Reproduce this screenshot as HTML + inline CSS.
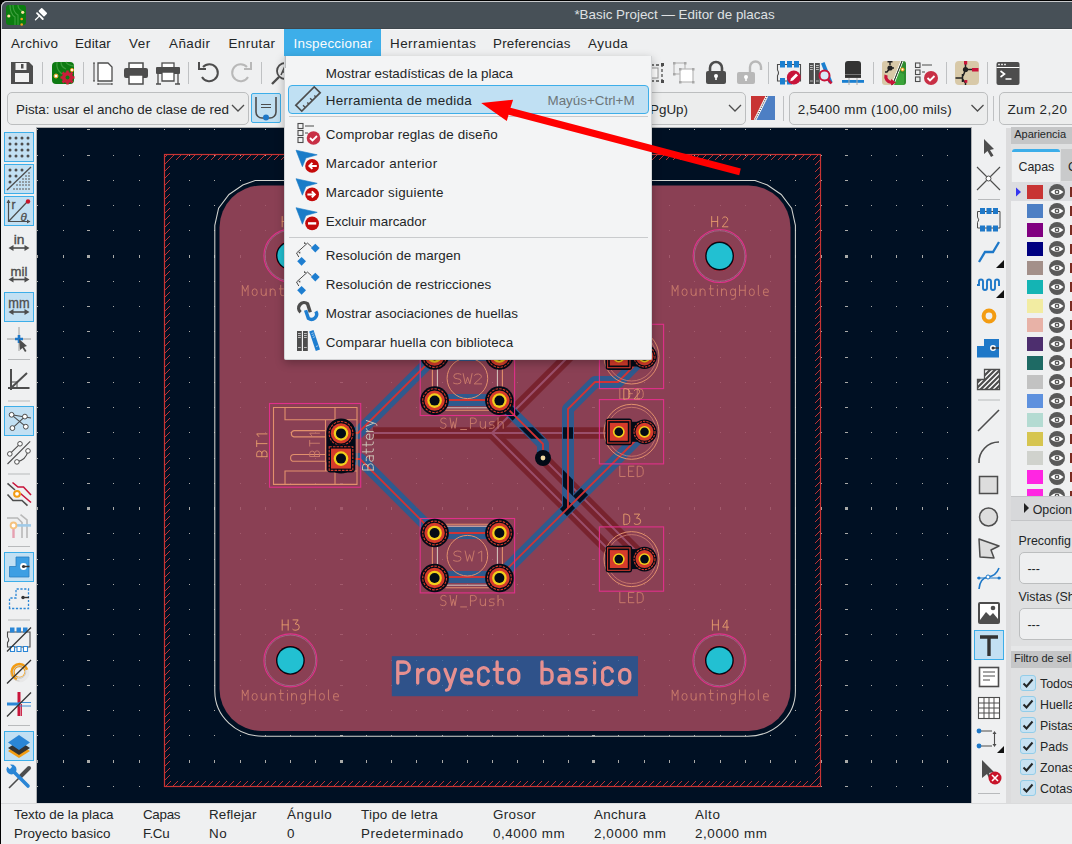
<!DOCTYPE html><html><head><meta charset="utf-8"><style>
*{margin:0;padding:0;box-sizing:border-box}
html,body{width:1072px;height:844px;overflow:hidden;background:#000}
body{position:relative;font-family:"Liberation Sans",sans-serif;font-size:13.4px;color:#232627}
.a{position:absolute}
.t{position:absolute;white-space:nowrap;line-height:1}
.sep{position:absolute;width:1px;background:#bfc1c3}
.hsep{position:absolute;height:1px;background:#c4c6c8}
.combo{position:absolute;border:1px solid #bcbebf;border-radius:5px;background:#eceded}
.tbtn{position:absolute;width:30px;height:30px;background:#c2e0f2;border:1px solid #3daee9;border-radius:2px}
svg{position:absolute;overflow:visible}
</style></head><body>
<div class="a" style="left:1px;top:1px;width:1071px;height:843px;background:#eff0f1;border-top-left-radius:6px;overflow:hidden"></div>
<div class="a" style="left:1px;top:1px;width:1071px;height:28px;background:#475057;border-top:1px solid #c8cacc;border-top-left-radius:6px;border-left:1px solid #c8cacc"></div>
<div class="a" style="left:2px;top:28px;width:1070px;height:1px;background:#3f474d"></div>
<div class="a" style="left:2px;top:29px;width:1070px;height:1px;background:#f7f7f8"></div>
<div class="t" style="left:574.4px;top:8.37px;font-size:13.4px;color:#dfe1e3;">*Basic Project — Editor de placas</div>
<div class="a" style="left:284px;top:29px;width:97px;height:27px;background:#3daee9"></div>
<div class="t" style="left:11px;top:36.87px;font-size:13.4px;color:#232627;letter-spacing:0.390px;">Archivo</div>
<div class="t" style="left:75px;top:36.87px;font-size:13.4px;color:#232627;letter-spacing:0.164px;">Editar</div>
<div class="t" style="left:129px;top:36.87px;font-size:13.4px;color:#232627;letter-spacing:0.600px;">Ver</div>
<div class="t" style="left:169px;top:36.87px;font-size:13.4px;color:#232627;letter-spacing:0.456px;">Añadir</div>
<div class="t" style="left:228.5px;top:36.87px;font-size:13.4px;color:#232627;letter-spacing:0.430px;">Enrutar</div>
<div class="t" style="left:293.5px;top:36.87px;font-size:13.4px;color:#fcfcfc;letter-spacing:0.233px;">Inspeccionar</div>
<div class="t" style="left:390px;top:36.87px;font-size:13.4px;color:#232627;letter-spacing:0.502px;">Herramientas</div>
<div class="t" style="left:493px;top:36.87px;font-size:13.4px;color:#232627;letter-spacing:0.201px;">Preferencias</div>
<div class="t" style="left:588px;top:36.87px;font-size:13.4px;color:#232627;letter-spacing:0.518px;">Ayuda</div>
<svg class="a" style="left:0;top:0" width="1072" height="100">
<g transform="translate(11,62) scale(1.0)"><path d="M0 0H18L22 4V22H0Z" fill="#4d4d4d"/><rect x="4.5" y="1" width="11" height="7" fill="#f2f2f2"/><rect x="10" y="2" width="2.5" height="4.5" fill="#4d4d4d"/><rect x="4" y="11" width="14" height="9" fill="#f2f2f2"/></g>
<g transform="translate(52,62) scale(1.0)"><rect x="0" y="0" width="22" height="22" rx="4" fill="#0d7a12"/><path d="M5 0 Q4 8 10 12 M9 0 Q9 5 14 7 M14 0 Q15 3 22 4" stroke="#3a9a3a" stroke-width="1.3" fill="none"/><circle cx="4" cy="14" r="2" fill="#fff" stroke="#f0a020" stroke-width="1"/><circle cx="20" cy="8" r="1.6" fill="#fff" stroke="#f0a020" stroke-width="1"/><circle cx="15.5" cy="15.5" r="5.5" fill="#c81e3a"/><circle cx="15.5" cy="15.5" r="2" fill="#0d7a12"/><path d="M15.5 8.5V22.5 M8.5 15.5H22.5 M10.5 10.5L20.5 20.5 M20.5 10.5L10.5 20.5" stroke="#c81e3a" stroke-width="2.5"/><circle cx="15.5" cy="15.5" r="2" fill="#0d7a12"/></g>
<g transform="translate(93,62) scale(1.0)"><path d="M5 1H15L19 5V19H5Z" fill="#fff" stroke="#4d4d4d" stroke-width="1.3"/><path d="M1 1V19 M0 1H2 M0 19H2 M5 22H19 M5 21V23 M19 21V23" stroke="#4d4d4d" stroke-width="1.1"/></g>
<g transform="translate(124,62) scale(1.0)"><rect x="5" y="1" width="14" height="6" fill="#fff" stroke="#4d4d4d" stroke-width="1.5"/><rect x="0" y="6" width="24" height="10" rx="2" fill="#4d4d4d"/><path d="M5 13H19V22H5Z" fill="#fff" stroke="#4d4d4d" stroke-width="1.5"/></g>
<g transform="translate(156,62) scale(1.0)"><rect x="6" y="1" width="12" height="5" fill="#fff" stroke="#4d4d4d" stroke-width="1.3"/><rect x="0" y="5" width="24" height="7" rx="1" fill="#4d4d4d"/><path d="M6 10H18V19H6Z" fill="#fff" stroke="#4d4d4d" stroke-width="1.3"/><path d="M2 12V22 M22 12V22 M0 22H5 M19 22H24" stroke="#4d4d4d" stroke-width="1.3"/></g>
<g transform="translate(198,61) scale(1.0)"><path d="M5 6 A8.5 8.5 0 1 1 4 16" fill="none" stroke="#4d4d4d" stroke-width="2"/><path d="M1 1V8H8" fill="none" stroke="#4d4d4d" stroke-width="2"/></g>
<g transform="translate(230,61) scale(1.0)"><g transform="translate(22,0) scale(-1,1)"><path d="M5 6 A8.5 8.5 0 1 1 4 16" fill="none" stroke="#b8b8b8" stroke-width="2"/><path d="M1 1V8H8" fill="none" stroke="#b8b8b8" stroke-width="2"/></g></g>
<g transform="translate(271,62) scale(1.0)"><circle cx="14" cy="9" r="8" fill="none" stroke="#4d4d4d" stroke-width="1.8"/><path d="M8 15L1 22" stroke="#4d4d4d" stroke-width="2.4"/><path d="M10 13L14 4L18 13 M11.5 10H16.5" stroke="#4d4d4d" stroke-width="1.5" fill="none"/></g>
<g transform="translate(652,62) scale(1.0)"><rect x="-6" y="3" width="16" height="16" fill="none" stroke="#4d4d4d" stroke-width="1.3" stroke-dasharray="3 2"/><rect x="-4" y="6" width="10" height="10" fill="#fff" stroke="#999" stroke-width="1"/><path d="M9 1h3v3h-3z M9 18h3v3h-3z" fill="#4d4d4d"/></g>
<g transform="translate(673,62) scale(1.0)"><rect x="1" y="1" width="11" height="11" fill="none" stroke="#b8b8b8" stroke-width="1.2"/><rect x="7" y="7" width="13" height="13" fill="#fff" stroke="#b8b8b8" stroke-width="1.2"/><path d="M0 0h2.5v2.5h-2.5z M11 0h2.5v2.5h-2.5z M0 11h2.5v2.5h-2.5z M6 6h2.5v2.5h-2.5z M19 6h2.5v2.5h-2.5z M6 19h2.5v2.5h-2.5z M19 19h2.5v2.5h-2.5z" fill="#a8a8a8"/></g>
<g transform="translate(705,61) scale(1.0)"><path d="M5 11V7a6 6 0 0 1 12 0V11" fill="none" stroke="#4d4d4d" stroke-width="2.6"/><rect x="1" y="10" width="20" height="13" rx="2" fill="#4d4d4d"/><circle cx="11" cy="15" r="2" fill="#fff"/><rect x="10.2" y="15" width="1.6" height="4" fill="#fff"/></g>
<g transform="translate(737,61) scale(1.0)"><path d="M13 11V6a5.5 5.5 0 0 1 11 0V9" fill="none" stroke="#b8b8b8" stroke-width="2.4"/><rect x="0" y="11" width="18" height="12" rx="2" fill="#b8b8b8"/><circle cx="9" cy="16" r="2" fill="#fff"/><rect x="8.2" y="16" width="1.6" height="4" fill="#fff"/></g>
<g transform="translate(777,61) scale(1.0)"><path d="M0.5 3.5H23.5V20H0.5V14.5Q2.5 12 0.5 9Z" fill="none" stroke="#4d4d4d" stroke-width="1.1"/><path d="M3 0h5v6.5h-5z M10 0h5v6.5h-5z M17 0h5v6.5h-5z M3 17h5v6.5h-5z M10 17h5v6.5h-5z" fill="#1a7fd0"/><circle cx="16.8" cy="16.5" r="6.9" fill="#c8143a"/><path d="M13.2 20.3l0.8-2.8 5-5 2 2-5 5z" fill="#fff"/></g>
<g transform="translate(809,61) scale(1.0)"><rect x="0" y="2" width="4.8" height="21" fill="#4d4d4d"/><rect x="6" y="2" width="4.8" height="21" fill="#4d4d4d"/><path d="M1 4.5h2.8M1 6.5h2.8M1 8.5h2.8M1 20h2.8M7 4.5h2.8M7 6.5h2.8M7 8.5h2.8M7 20h2.8" stroke="#c8c8c8" stroke-width="0.9"/><path d="M12 2.5l3.5-1.5 8 20-3.5 1.5z" fill="#1a7fd0"/><circle cx="15.5" cy="14.5" r="5" fill="#d8eaf7" stroke="#c8143a" stroke-width="2"/><path d="M18.8 18.2L22.5 22.5" stroke="#c8143a" stroke-width="2.6"/></g>
<g transform="translate(842,61) scale(1.0)"><path d="M3 3Q3 0 6 0H16Q19 0 19 3V16H3Z" fill="#333"/><path d="M3 13.5H19" stroke="#777" stroke-width="1"/><rect x="0" y="19" width="22" height="2.8" fill="#1a7fd0"/><path d="M3 16.5H19" stroke="#444" stroke-width="1"/><path d="M7 17V24 M15 17V24" stroke="#aaa" stroke-width="1"/></g>
<g transform="translate(882,61) scale(1.0)"><clipPath id="schc"><rect x="0" y="0" width="24" height="24" rx="3"/></clipPath><g clip-path="url(#schc)"><rect x="0" y="0" width="24" height="24" fill="#d8c9a8"/><path d="M19.5 0H24V24H10Z" fill="#2e8b30"/><path d="M15 10L22 13V24H11Z" fill="#3aa43a"/><path d="M19 0L9.5 24 M21 0L11.5 24" stroke="#fff" stroke-width="1"/><path d="M20 0L10.5 24" stroke="#333" stroke-width="1"/></g><circle cx="20.5" cy="8.5" r="2" fill="#f39c12"/><circle cx="20.5" cy="8.5" r="0.9" fill="#fff"/><path d="M8 0V4M5.5 0.7H10.5M8 7H12M8 7L5 11L3 11" stroke="#222" stroke-width="1.4" fill="none"/><circle cx="8" cy="7" r="2.6" fill="#222"/><path d="M4 14A6 6 0 0 0 9.5 21.5" stroke="#c8143a" stroke-width="3.2" fill="none"/><path d="M9 18L14 21.5L9 24.5Z" fill="#c8143a"/></g>
<g transform="translate(915,62) scale(1.0)"><rect x="0.5" y="1" width="4.5" height="4.5" fill="none" stroke="#4d4d4d" stroke-width="1.1"/><rect x="0.5" y="8" width="4.5" height="4.5" fill="none" stroke="#4d4d4d" stroke-width="1.1"/><rect x="0.5" y="15" width="4.5" height="4.5" fill="none" stroke="#4d4d4d" stroke-width="1.1"/><path d="M7 3H17 M7 10H10" stroke="#4d4d4d" stroke-width="1.1"/><circle cx="16" cy="16" r="7" fill="#c82f45"/><path d="M12.5 16l2.5 2.5 4.5-4.5" stroke="#fff" stroke-width="1.9" fill="none"/></g>
<g transform="translate(955,61) scale(1.0)"><rect x="0" y="0" width="24" height="24" rx="4" fill="#d8c9a8"/><path d="M10.5 0V7 M10.5 8.5H18 M10.5 9L8 15 M0.5 17H7.5 M7.5 13V21 M7.5 18L10.5 22 V24" stroke="#222" stroke-width="1.5" fill="none"/><circle cx="10.5" cy="8.5" r="2.6" fill="#222"/><rect x="9" y="0" width="3.2" height="3.5" fill="#c8143a"/><rect x="17" y="7" width="6.5" height="3.5" fill="#c8143a"/><rect x="9.5" y="19" width="2.8" height="2.8" fill="#c8143a"/></g>
<g transform="translate(996.5,62) scale(1.0)"><rect x="0" y="0" width="23" height="23" rx="2" fill="#4d4d4d"/><rect x="0" y="5" width="23" height="1" fill="#fff"/><path d="M2.5 1.5v2M1.5 2.5h2M5.5 1.5v2M4.5 2.5h2M8.5 1.5v2M7.5 2.5h2" stroke="#fff" stroke-width="0.7"/><path d="M4 9l4 3-4 3 M9 17h6" stroke="#fff" stroke-width="1.6" fill="none"/></g>
</svg>
<div class="sep" style="left:42.0px;top:62px;height:22px"></div>
<div class="sep" style="left:83.0px;top:62px;height:22px"></div>
<div class="sep" style="left:188.0px;top:62px;height:22px"></div>
<div class="sep" style="left:261.0px;top:62px;height:22px"></div>
<div class="sep" style="left:768.0px;top:62px;height:22px"></div>
<div class="sep" style="left:873.0px;top:62px;height:22px"></div>
<div class="sep" style="left:946.0px;top:62px;height:22px"></div>
<div class="sep" style="left:986.5px;top:62px;height:22px"></div>
<div class="combo" style="left:7px;top:92px;width:242px;height:33px"></div>
<div class="t" style="left:16px;top:102.87px;font-size:13.4px;color:#232627;">Pista: usar el ancho de clase de red</div>
<div class="tbtn" style="left:251px;top:93px;width:30px;height:30px"></div>
<div class="combo" style="left:620px;top:92px;width:126px;height:33px"></div>
<div class="t" style="left:650px;top:102.87px;font-size:13.4px;color:#232627;">PgUp)</div>
<div class="combo" style="left:789px;top:92px;width:199px;height:33px"></div>
<div class="t" style="left:797.7px;top:102.87px;font-size:13.4px;color:#232627;letter-spacing:0.270px;">2,5400 mm (100,00 mils)</div>
<div class="sep" style="left:993px;top:96px;height:25px"></div>
<svg class="a" style="left:0;top:0" width="1072" height="130">
<rect x="6" y="5" width="20" height="20" rx="3" fill="#0b7d10"/><path d="M10 5Q10 14 15 17V25 M13 5Q13 12 18 15V25 M18 5Q18 9 22 11" stroke="#3fa03f" stroke-width="1.1" fill="none"/><circle cx="8.8" cy="16" r="1.6" fill="#fde0a0"/><circle cx="22.7" cy="12.3" r="1.6" fill="#fde0a0"/><circle cx="21.7" cy="19" r="1.3" fill="#f0a020"/><circle cx="21.7" cy="24.5" r="1.3" fill="#f0a020"/>
<path d="M35.5 19.8L39.2 16.1" stroke="#fff" stroke-width="1.3" stroke-linecap="round"/><path d="M37 13.2L42.8 19" stroke="#fff" stroke-width="1.8" stroke-linecap="round"/><g transform="translate(43.2,12.6) rotate(-45)"><rect x="-2.4" y="-4.5" width="4.8" height="8" rx="0.8" fill="#fff"/></g>
<path d="M232 105l6 6 6-6" fill="none" stroke="#4d4d4d" stroke-width="1.3"/>
<path d="M729 105l6 6 6-6" fill="none" stroke="#4d4d4d" stroke-width="1.3"/>
<path d="M971.5 105l6 6 6-6" fill="none" stroke="#4d4d4d" stroke-width="1.3"/>
<path d="M256 97V112a6 6 0 0 0 6 6H270a6 6 0 0 0 6 -6V97" fill="none" stroke="#4d4d4d" stroke-width="1.6"/><path d="M261 104.5H271 M261 107.5H271" stroke="#4d4d4d" stroke-width="1.2"/><circle cx="266" cy="117.5" r="3" fill="#1e78c8"/>
<path d="M751 96H775V120H751Z" fill="#4d7fc4"/><path d="M751 96H767L755 120H751Z" fill="#c83434"/><path d="M767 96L755 120" stroke="#fff" stroke-width="2.6"/><path d="M767 96L755 120" stroke="#222" stroke-width="1" stroke-dasharray="1.2 1.2"/>
</svg>
<div class="sep" style="left:783px;top:96px;height:25px"></div>
<div class="combo" style="left:999px;top:92px;width:90px;height:33px"></div>
<div class="t" style="left:1007.5px;top:102.87px;font-size:13.4px;color:#232627;letter-spacing:0.400px;">Zum 2,20</div>
<div class="a" style="left:36px;top:127px;width:936px;height:677px;background:#aeb0b2"></div>
<svg class="a" style="left:0;top:0" width="1072" height="844" viewBox="0 0 1072 844">
<defs><clipPath id="cv"><rect x="37" y="128" width="934" height="675"/></clipPath>
<pattern id="hatch" patternUnits="userSpaceOnUse" width="7" height="7"><path d="M-1,8 L8,-1 M-4,4 L4,-4 M3,11 L11,3" stroke="#c83434" stroke-width="0.95"/></pattern>
</defs>
<g clip-path="url(#cv)">
<rect x="37" y="128" width="934" height="675" fill="#001023"/>
<path d="M37 129h1v1h-1zM37 155h1v1h-1zM37 180h1v1h-1zM37 205h1v1h-1zM37 230h1v1h-1zM37 255h1v3h-1zM37 281h1v1h-1zM37 306h1v1h-1zM37 331h1v1h-1zM37 357h1v1h-1zM37 382h1v1h-1zM37 407h1v1h-1zM37 432h1v1h-1zM37 458h1v1h-1zM37 483h1v1h-1zM37 507h1v3h-1zM37 533h1v1h-1zM37 559h1v1h-1zM37 584h1v1h-1zM37 609h1v1h-1zM37 634h1v1h-1zM37 660h1v1h-1zM37 685h1v1h-1zM37 710h1v1h-1zM37 735h1v1h-1zM37 760h1v3h-1zM37 786h1v1h-1zM63 129h1v1h-1zM63 155h1v1h-1zM63 180h1v1h-1zM63 205h1v1h-1zM63 230h1v1h-1zM63 255h1v3h-1zM63 281h1v1h-1zM63 306h1v1h-1zM63 331h1v1h-1zM63 357h1v1h-1zM63 382h1v1h-1zM63 407h1v1h-1zM63 432h1v1h-1zM63 458h1v1h-1zM63 483h1v1h-1zM63 507h1v3h-1zM63 533h1v1h-1zM63 559h1v1h-1zM63 584h1v1h-1zM63 609h1v1h-1zM63 634h1v1h-1zM63 660h1v1h-1zM63 685h1v1h-1zM63 710h1v1h-1zM63 735h1v1h-1zM63 760h1v3h-1zM63 786h1v1h-1zM87 129h3v1h-3zM87 155h3v1h-3zM87 180h3v1h-3zM87 205h3v1h-3zM87 230h3v1h-3zM87 255h3v3h-3zM87 281h3v1h-3zM87 306h3v1h-3zM87 331h3v1h-3zM87 357h3v1h-3zM87 382h3v1h-3zM87 407h3v1h-3zM87 432h3v1h-3zM87 458h3v1h-3zM87 483h3v1h-3zM87 507h3v3h-3zM87 533h3v1h-3zM87 559h3v1h-3zM87 584h3v1h-3zM87 609h3v1h-3zM87 634h3v1h-3zM87 660h3v1h-3zM87 685h3v1h-3zM87 710h3v1h-3zM87 735h3v1h-3zM87 760h3v3h-3zM87 786h3v1h-3zM113 129h1v1h-1zM113 155h1v1h-1zM113 180h1v1h-1zM113 205h1v1h-1zM113 230h1v1h-1zM113 255h1v3h-1zM113 281h1v1h-1zM113 306h1v1h-1zM113 331h1v1h-1zM113 357h1v1h-1zM113 382h1v1h-1zM113 407h1v1h-1zM113 432h1v1h-1zM113 458h1v1h-1zM113 483h1v1h-1zM113 507h1v3h-1zM113 533h1v1h-1zM113 559h1v1h-1zM113 584h1v1h-1zM113 609h1v1h-1zM113 634h1v1h-1zM113 660h1v1h-1zM113 685h1v1h-1zM113 710h1v1h-1zM113 735h1v1h-1zM113 760h1v3h-1zM113 786h1v1h-1zM139 129h1v1h-1zM139 155h1v1h-1zM139 180h1v1h-1zM139 205h1v1h-1zM139 230h1v1h-1zM139 255h1v3h-1zM139 281h1v1h-1zM139 306h1v1h-1zM139 331h1v1h-1zM139 357h1v1h-1zM139 382h1v1h-1zM139 407h1v1h-1zM139 432h1v1h-1zM139 458h1v1h-1zM139 483h1v1h-1zM139 507h1v3h-1zM139 533h1v1h-1zM139 559h1v1h-1zM139 584h1v1h-1zM139 609h1v1h-1zM139 634h1v1h-1zM139 660h1v1h-1zM139 685h1v1h-1zM139 710h1v1h-1zM139 735h1v1h-1zM139 760h1v3h-1zM139 786h1v1h-1zM164 129h1v1h-1zM164 155h1v1h-1zM164 180h1v1h-1zM164 205h1v1h-1zM164 230h1v1h-1zM164 255h1v3h-1zM164 281h1v1h-1zM164 306h1v1h-1zM164 331h1v1h-1zM164 357h1v1h-1zM164 382h1v1h-1zM164 407h1v1h-1zM164 432h1v1h-1zM164 458h1v1h-1zM164 483h1v1h-1zM164 507h1v3h-1zM164 533h1v1h-1zM164 559h1v1h-1zM164 584h1v1h-1zM164 609h1v1h-1zM164 634h1v1h-1zM164 660h1v1h-1zM164 685h1v1h-1zM164 710h1v1h-1zM164 735h1v1h-1zM164 760h1v3h-1zM164 786h1v1h-1zM189 129h1v1h-1zM189 155h1v1h-1zM189 180h1v1h-1zM189 205h1v1h-1zM189 230h1v1h-1zM189 255h1v3h-1zM189 281h1v1h-1zM189 306h1v1h-1zM189 331h1v1h-1zM189 357h1v1h-1zM189 382h1v1h-1zM189 407h1v1h-1zM189 432h1v1h-1zM189 458h1v1h-1zM189 483h1v1h-1zM189 507h1v3h-1zM189 533h1v1h-1zM189 559h1v1h-1zM189 584h1v1h-1zM189 609h1v1h-1zM189 634h1v1h-1zM189 660h1v1h-1zM189 685h1v1h-1zM189 710h1v1h-1zM189 735h1v1h-1zM189 760h1v3h-1zM189 786h1v1h-1zM214 129h1v1h-1zM214 155h1v1h-1zM214 180h1v1h-1zM214 205h1v1h-1zM214 230h1v1h-1zM214 255h1v3h-1zM214 281h1v1h-1zM214 306h1v1h-1zM214 331h1v1h-1zM214 357h1v1h-1zM214 382h1v1h-1zM214 407h1v1h-1zM214 432h1v1h-1zM214 458h1v1h-1zM214 483h1v1h-1zM214 507h1v3h-1zM214 533h1v1h-1zM214 559h1v1h-1zM214 584h1v1h-1zM214 609h1v1h-1zM214 634h1v1h-1zM214 660h1v1h-1zM214 685h1v1h-1zM214 710h1v1h-1zM214 735h1v1h-1zM214 760h1v3h-1zM214 786h1v1h-1zM240 129h1v1h-1zM240 155h1v1h-1zM240 180h1v1h-1zM240 205h1v1h-1zM240 230h1v1h-1zM240 255h1v3h-1zM240 281h1v1h-1zM240 306h1v1h-1zM240 331h1v1h-1zM240 357h1v1h-1zM240 382h1v1h-1zM240 407h1v1h-1zM240 432h1v1h-1zM240 458h1v1h-1zM240 483h1v1h-1zM240 507h1v3h-1zM240 533h1v1h-1zM240 559h1v1h-1zM240 584h1v1h-1zM240 609h1v1h-1zM240 634h1v1h-1zM240 660h1v1h-1zM240 685h1v1h-1zM240 710h1v1h-1zM240 735h1v1h-1zM240 760h1v3h-1zM240 786h1v1h-1zM265 129h1v1h-1zM265 155h1v1h-1zM265 180h1v1h-1zM265 205h1v1h-1zM265 230h1v1h-1zM265 255h1v3h-1zM265 281h1v1h-1zM265 306h1v1h-1zM265 331h1v1h-1zM265 357h1v1h-1zM265 382h1v1h-1zM265 407h1v1h-1zM265 432h1v1h-1zM265 458h1v1h-1zM265 483h1v1h-1zM265 507h1v3h-1zM265 533h1v1h-1zM265 559h1v1h-1zM265 584h1v1h-1zM265 609h1v1h-1zM265 634h1v1h-1zM265 660h1v1h-1zM265 685h1v1h-1zM265 710h1v1h-1zM265 735h1v1h-1zM265 760h1v3h-1zM265 786h1v1h-1zM290 129h1v1h-1zM290 155h1v1h-1zM290 180h1v1h-1zM290 205h1v1h-1zM290 230h1v1h-1zM290 255h1v3h-1zM290 281h1v1h-1zM290 306h1v1h-1zM290 331h1v1h-1zM290 357h1v1h-1zM290 382h1v1h-1zM290 407h1v1h-1zM290 432h1v1h-1zM290 458h1v1h-1zM290 483h1v1h-1zM290 507h1v3h-1zM290 533h1v1h-1zM290 559h1v1h-1zM290 584h1v1h-1zM290 609h1v1h-1zM290 634h1v1h-1zM290 660h1v1h-1zM290 685h1v1h-1zM290 710h1v1h-1zM290 735h1v1h-1zM290 760h1v3h-1zM290 786h1v1h-1zM315 129h1v1h-1zM315 155h1v1h-1zM315 180h1v1h-1zM315 205h1v1h-1zM315 230h1v1h-1zM315 255h1v3h-1zM315 281h1v1h-1zM315 306h1v1h-1zM315 331h1v1h-1zM315 357h1v1h-1zM315 382h1v1h-1zM315 407h1v1h-1zM315 432h1v1h-1zM315 458h1v1h-1zM315 483h1v1h-1zM315 507h1v3h-1zM315 533h1v1h-1zM315 559h1v1h-1zM315 584h1v1h-1zM315 609h1v1h-1zM315 634h1v1h-1zM315 660h1v1h-1zM315 685h1v1h-1zM315 710h1v1h-1zM315 735h1v1h-1zM315 760h1v3h-1zM315 786h1v1h-1zM340 129h3v1h-3zM340 155h3v1h-3zM340 180h3v1h-3zM340 205h3v1h-3zM340 230h3v1h-3zM340 255h3v3h-3zM340 281h3v1h-3zM340 306h3v1h-3zM340 331h3v1h-3zM340 357h3v1h-3zM340 382h3v1h-3zM340 407h3v1h-3zM340 432h3v1h-3zM340 458h3v1h-3zM340 483h3v1h-3zM340 507h3v3h-3zM340 533h3v1h-3zM340 559h3v1h-3zM340 584h3v1h-3zM340 609h3v1h-3zM340 634h3v1h-3zM340 660h3v1h-3zM340 685h3v1h-3zM340 710h3v1h-3zM340 735h3v1h-3zM340 760h3v3h-3zM340 786h3v1h-3zM366 129h1v1h-1zM366 155h1v1h-1zM366 180h1v1h-1zM366 205h1v1h-1zM366 230h1v1h-1zM366 255h1v3h-1zM366 281h1v1h-1zM366 306h1v1h-1zM366 331h1v1h-1zM366 357h1v1h-1zM366 382h1v1h-1zM366 407h1v1h-1zM366 432h1v1h-1zM366 458h1v1h-1zM366 483h1v1h-1zM366 507h1v3h-1zM366 533h1v1h-1zM366 559h1v1h-1zM366 584h1v1h-1zM366 609h1v1h-1zM366 634h1v1h-1zM366 660h1v1h-1zM366 685h1v1h-1zM366 710h1v1h-1zM366 735h1v1h-1zM366 760h1v3h-1zM366 786h1v1h-1zM391 129h1v1h-1zM391 155h1v1h-1zM391 180h1v1h-1zM391 205h1v1h-1zM391 230h1v1h-1zM391 255h1v3h-1zM391 281h1v1h-1zM391 306h1v1h-1zM391 331h1v1h-1zM391 357h1v1h-1zM391 382h1v1h-1zM391 407h1v1h-1zM391 432h1v1h-1zM391 458h1v1h-1zM391 483h1v1h-1zM391 507h1v3h-1zM391 533h1v1h-1zM391 559h1v1h-1zM391 584h1v1h-1zM391 609h1v1h-1zM391 634h1v1h-1zM391 660h1v1h-1zM391 685h1v1h-1zM391 710h1v1h-1zM391 735h1v1h-1zM391 760h1v3h-1zM391 786h1v1h-1zM416 129h1v1h-1zM416 155h1v1h-1zM416 180h1v1h-1zM416 205h1v1h-1zM416 230h1v1h-1zM416 255h1v3h-1zM416 281h1v1h-1zM416 306h1v1h-1zM416 331h1v1h-1zM416 357h1v1h-1zM416 382h1v1h-1zM416 407h1v1h-1zM416 432h1v1h-1zM416 458h1v1h-1zM416 483h1v1h-1zM416 507h1v3h-1zM416 533h1v1h-1zM416 559h1v1h-1zM416 584h1v1h-1zM416 609h1v1h-1zM416 634h1v1h-1zM416 660h1v1h-1zM416 685h1v1h-1zM416 710h1v1h-1zM416 735h1v1h-1zM416 760h1v3h-1zM416 786h1v1h-1zM442 129h1v1h-1zM442 155h1v1h-1zM442 180h1v1h-1zM442 205h1v1h-1zM442 230h1v1h-1zM442 255h1v3h-1zM442 281h1v1h-1zM442 306h1v1h-1zM442 331h1v1h-1zM442 357h1v1h-1zM442 382h1v1h-1zM442 407h1v1h-1zM442 432h1v1h-1zM442 458h1v1h-1zM442 483h1v1h-1zM442 507h1v3h-1zM442 533h1v1h-1zM442 559h1v1h-1zM442 584h1v1h-1zM442 609h1v1h-1zM442 634h1v1h-1zM442 660h1v1h-1zM442 685h1v1h-1zM442 710h1v1h-1zM442 735h1v1h-1zM442 760h1v3h-1zM442 786h1v1h-1zM467 129h1v1h-1zM467 155h1v1h-1zM467 180h1v1h-1zM467 205h1v1h-1zM467 230h1v1h-1zM467 255h1v3h-1zM467 281h1v1h-1zM467 306h1v1h-1zM467 331h1v1h-1zM467 357h1v1h-1zM467 382h1v1h-1zM467 407h1v1h-1zM467 432h1v1h-1zM467 458h1v1h-1zM467 483h1v1h-1zM467 507h1v3h-1zM467 533h1v1h-1zM467 559h1v1h-1zM467 584h1v1h-1zM467 609h1v1h-1zM467 634h1v1h-1zM467 660h1v1h-1zM467 685h1v1h-1zM467 710h1v1h-1zM467 735h1v1h-1zM467 760h1v3h-1zM467 786h1v1h-1zM492 129h1v1h-1zM492 155h1v1h-1zM492 180h1v1h-1zM492 205h1v1h-1zM492 230h1v1h-1zM492 255h1v3h-1zM492 281h1v1h-1zM492 306h1v1h-1zM492 331h1v1h-1zM492 357h1v1h-1zM492 382h1v1h-1zM492 407h1v1h-1zM492 432h1v1h-1zM492 458h1v1h-1zM492 483h1v1h-1zM492 507h1v3h-1zM492 533h1v1h-1zM492 559h1v1h-1zM492 584h1v1h-1zM492 609h1v1h-1zM492 634h1v1h-1zM492 660h1v1h-1zM492 685h1v1h-1zM492 710h1v1h-1zM492 735h1v1h-1zM492 760h1v3h-1zM492 786h1v1h-1zM517 129h1v1h-1zM517 155h1v1h-1zM517 180h1v1h-1zM517 205h1v1h-1zM517 230h1v1h-1zM517 255h1v3h-1zM517 281h1v1h-1zM517 306h1v1h-1zM517 331h1v1h-1zM517 357h1v1h-1zM517 382h1v1h-1zM517 407h1v1h-1zM517 432h1v1h-1zM517 458h1v1h-1zM517 483h1v1h-1zM517 507h1v3h-1zM517 533h1v1h-1zM517 559h1v1h-1zM517 584h1v1h-1zM517 609h1v1h-1zM517 634h1v1h-1zM517 660h1v1h-1zM517 685h1v1h-1zM517 710h1v1h-1zM517 735h1v1h-1zM517 760h1v3h-1zM517 786h1v1h-1zM543 129h1v1h-1zM543 155h1v1h-1zM543 180h1v1h-1zM543 205h1v1h-1zM543 230h1v1h-1zM543 255h1v3h-1zM543 281h1v1h-1zM543 306h1v1h-1zM543 331h1v1h-1zM543 357h1v1h-1zM543 382h1v1h-1zM543 407h1v1h-1zM543 432h1v1h-1zM543 458h1v1h-1zM543 483h1v1h-1zM543 507h1v3h-1zM543 533h1v1h-1zM543 559h1v1h-1zM543 584h1v1h-1zM543 609h1v1h-1zM543 634h1v1h-1zM543 660h1v1h-1zM543 685h1v1h-1zM543 710h1v1h-1zM543 735h1v1h-1zM543 760h1v3h-1zM543 786h1v1h-1zM568 129h1v1h-1zM568 155h1v1h-1zM568 180h1v1h-1zM568 205h1v1h-1zM568 230h1v1h-1zM568 255h1v3h-1zM568 281h1v1h-1zM568 306h1v1h-1zM568 331h1v1h-1zM568 357h1v1h-1zM568 382h1v1h-1zM568 407h1v1h-1zM568 432h1v1h-1zM568 458h1v1h-1zM568 483h1v1h-1zM568 507h1v3h-1zM568 533h1v1h-1zM568 559h1v1h-1zM568 584h1v1h-1zM568 609h1v1h-1zM568 634h1v1h-1zM568 660h1v1h-1zM568 685h1v1h-1zM568 710h1v1h-1zM568 735h1v1h-1zM568 760h1v3h-1zM568 786h1v1h-1zM592 129h3v1h-3zM592 155h3v1h-3zM592 180h3v1h-3zM592 205h3v1h-3zM592 230h3v1h-3zM592 255h3v3h-3zM592 281h3v1h-3zM592 306h3v1h-3zM592 331h3v1h-3zM592 357h3v1h-3zM592 382h3v1h-3zM592 407h3v1h-3zM592 432h3v1h-3zM592 458h3v1h-3zM592 483h3v1h-3zM592 507h3v3h-3zM592 533h3v1h-3zM592 559h3v1h-3zM592 584h3v1h-3zM592 609h3v1h-3zM592 634h3v1h-3zM592 660h3v1h-3zM592 685h3v1h-3zM592 710h3v1h-3zM592 735h3v1h-3zM592 760h3v3h-3zM592 786h3v1h-3zM618 129h1v1h-1zM618 155h1v1h-1zM618 180h1v1h-1zM618 205h1v1h-1zM618 230h1v1h-1zM618 255h1v3h-1zM618 281h1v1h-1zM618 306h1v1h-1zM618 331h1v1h-1zM618 357h1v1h-1zM618 382h1v1h-1zM618 407h1v1h-1zM618 432h1v1h-1zM618 458h1v1h-1zM618 483h1v1h-1zM618 507h1v3h-1zM618 533h1v1h-1zM618 559h1v1h-1zM618 584h1v1h-1zM618 609h1v1h-1zM618 634h1v1h-1zM618 660h1v1h-1zM618 685h1v1h-1zM618 710h1v1h-1zM618 735h1v1h-1zM618 760h1v3h-1zM618 786h1v1h-1zM644 129h1v1h-1zM644 155h1v1h-1zM644 180h1v1h-1zM644 205h1v1h-1zM644 230h1v1h-1zM644 255h1v3h-1zM644 281h1v1h-1zM644 306h1v1h-1zM644 331h1v1h-1zM644 357h1v1h-1zM644 382h1v1h-1zM644 407h1v1h-1zM644 432h1v1h-1zM644 458h1v1h-1zM644 483h1v1h-1zM644 507h1v3h-1zM644 533h1v1h-1zM644 559h1v1h-1zM644 584h1v1h-1zM644 609h1v1h-1zM644 634h1v1h-1zM644 660h1v1h-1zM644 685h1v1h-1zM644 710h1v1h-1zM644 735h1v1h-1zM644 760h1v3h-1zM644 786h1v1h-1zM669 129h1v1h-1zM669 155h1v1h-1zM669 180h1v1h-1zM669 205h1v1h-1zM669 230h1v1h-1zM669 255h1v3h-1zM669 281h1v1h-1zM669 306h1v1h-1zM669 331h1v1h-1zM669 357h1v1h-1zM669 382h1v1h-1zM669 407h1v1h-1zM669 432h1v1h-1zM669 458h1v1h-1zM669 483h1v1h-1zM669 507h1v3h-1zM669 533h1v1h-1zM669 559h1v1h-1zM669 584h1v1h-1zM669 609h1v1h-1zM669 634h1v1h-1zM669 660h1v1h-1zM669 685h1v1h-1zM669 710h1v1h-1zM669 735h1v1h-1zM669 760h1v3h-1zM669 786h1v1h-1zM694 129h1v1h-1zM694 155h1v1h-1zM694 180h1v1h-1zM694 205h1v1h-1zM694 230h1v1h-1zM694 255h1v3h-1zM694 281h1v1h-1zM694 306h1v1h-1zM694 331h1v1h-1zM694 357h1v1h-1zM694 382h1v1h-1zM694 407h1v1h-1zM694 432h1v1h-1zM694 458h1v1h-1zM694 483h1v1h-1zM694 507h1v3h-1zM694 533h1v1h-1zM694 559h1v1h-1zM694 584h1v1h-1zM694 609h1v1h-1zM694 634h1v1h-1zM694 660h1v1h-1zM694 685h1v1h-1zM694 710h1v1h-1zM694 735h1v1h-1zM694 760h1v3h-1zM694 786h1v1h-1zM720 129h1v1h-1zM720 155h1v1h-1zM720 180h1v1h-1zM720 205h1v1h-1zM720 230h1v1h-1zM720 255h1v3h-1zM720 281h1v1h-1zM720 306h1v1h-1zM720 331h1v1h-1zM720 357h1v1h-1zM720 382h1v1h-1zM720 407h1v1h-1zM720 432h1v1h-1zM720 458h1v1h-1zM720 483h1v1h-1zM720 507h1v3h-1zM720 533h1v1h-1zM720 559h1v1h-1zM720 584h1v1h-1zM720 609h1v1h-1zM720 634h1v1h-1zM720 660h1v1h-1zM720 685h1v1h-1zM720 710h1v1h-1zM720 735h1v1h-1zM720 760h1v3h-1zM720 786h1v1h-1zM745 129h1v1h-1zM745 155h1v1h-1zM745 180h1v1h-1zM745 205h1v1h-1zM745 230h1v1h-1zM745 255h1v3h-1zM745 281h1v1h-1zM745 306h1v1h-1zM745 331h1v1h-1zM745 357h1v1h-1zM745 382h1v1h-1zM745 407h1v1h-1zM745 432h1v1h-1zM745 458h1v1h-1zM745 483h1v1h-1zM745 507h1v3h-1zM745 533h1v1h-1zM745 559h1v1h-1zM745 584h1v1h-1zM745 609h1v1h-1zM745 634h1v1h-1zM745 660h1v1h-1zM745 685h1v1h-1zM745 710h1v1h-1zM745 735h1v1h-1zM745 760h1v3h-1zM745 786h1v1h-1zM770 129h1v1h-1zM770 155h1v1h-1zM770 180h1v1h-1zM770 205h1v1h-1zM770 230h1v1h-1zM770 255h1v3h-1zM770 281h1v1h-1zM770 306h1v1h-1zM770 331h1v1h-1zM770 357h1v1h-1zM770 382h1v1h-1zM770 407h1v1h-1zM770 432h1v1h-1zM770 458h1v1h-1zM770 483h1v1h-1zM770 507h1v3h-1zM770 533h1v1h-1zM770 559h1v1h-1zM770 584h1v1h-1zM770 609h1v1h-1zM770 634h1v1h-1zM770 660h1v1h-1zM770 685h1v1h-1zM770 710h1v1h-1zM770 735h1v1h-1zM770 760h1v3h-1zM770 786h1v1h-1zM795 129h1v1h-1zM795 155h1v1h-1zM795 180h1v1h-1zM795 205h1v1h-1zM795 230h1v1h-1zM795 255h1v3h-1zM795 281h1v1h-1zM795 306h1v1h-1zM795 331h1v1h-1zM795 357h1v1h-1zM795 382h1v1h-1zM795 407h1v1h-1zM795 432h1v1h-1zM795 458h1v1h-1zM795 483h1v1h-1zM795 507h1v3h-1zM795 533h1v1h-1zM795 559h1v1h-1zM795 584h1v1h-1zM795 609h1v1h-1zM795 634h1v1h-1zM795 660h1v1h-1zM795 685h1v1h-1zM795 710h1v1h-1zM795 735h1v1h-1zM795 760h1v3h-1zM795 786h1v1h-1zM821 129h1v1h-1zM821 155h1v1h-1zM821 180h1v1h-1zM821 205h1v1h-1zM821 230h1v1h-1zM821 255h1v3h-1zM821 281h1v1h-1zM821 306h1v1h-1zM821 331h1v1h-1zM821 357h1v1h-1zM821 382h1v1h-1zM821 407h1v1h-1zM821 432h1v1h-1zM821 458h1v1h-1zM821 483h1v1h-1zM821 507h1v3h-1zM821 533h1v1h-1zM821 559h1v1h-1zM821 584h1v1h-1zM821 609h1v1h-1zM821 634h1v1h-1zM821 660h1v1h-1zM821 685h1v1h-1zM821 710h1v1h-1zM821 735h1v1h-1zM821 760h1v3h-1zM821 786h1v1h-1zM845 129h3v1h-3zM845 155h3v1h-3zM845 180h3v1h-3zM845 205h3v1h-3zM845 230h3v1h-3zM845 255h3v3h-3zM845 281h3v1h-3zM845 306h3v1h-3zM845 331h3v1h-3zM845 357h3v1h-3zM845 382h3v1h-3zM845 407h3v1h-3zM845 432h3v1h-3zM845 458h3v1h-3zM845 483h3v1h-3zM845 507h3v3h-3zM845 533h3v1h-3zM845 559h3v1h-3zM845 584h3v1h-3zM845 609h3v1h-3zM845 634h3v1h-3zM845 660h3v1h-3zM845 685h3v1h-3zM845 710h3v1h-3zM845 735h3v1h-3zM845 760h3v3h-3zM845 786h3v1h-3zM871 129h1v1h-1zM871 155h1v1h-1zM871 180h1v1h-1zM871 205h1v1h-1zM871 230h1v1h-1zM871 255h1v3h-1zM871 281h1v1h-1zM871 306h1v1h-1zM871 331h1v1h-1zM871 357h1v1h-1zM871 382h1v1h-1zM871 407h1v1h-1zM871 432h1v1h-1zM871 458h1v1h-1zM871 483h1v1h-1zM871 507h1v3h-1zM871 533h1v1h-1zM871 559h1v1h-1zM871 584h1v1h-1zM871 609h1v1h-1zM871 634h1v1h-1zM871 660h1v1h-1zM871 685h1v1h-1zM871 710h1v1h-1zM871 735h1v1h-1zM871 760h1v3h-1zM871 786h1v1h-1zM896 129h1v1h-1zM896 155h1v1h-1zM896 180h1v1h-1zM896 205h1v1h-1zM896 230h1v1h-1zM896 255h1v3h-1zM896 281h1v1h-1zM896 306h1v1h-1zM896 331h1v1h-1zM896 357h1v1h-1zM896 382h1v1h-1zM896 407h1v1h-1zM896 432h1v1h-1zM896 458h1v1h-1zM896 483h1v1h-1zM896 507h1v3h-1zM896 533h1v1h-1zM896 559h1v1h-1zM896 584h1v1h-1zM896 609h1v1h-1zM896 634h1v1h-1zM896 660h1v1h-1zM896 685h1v1h-1zM896 710h1v1h-1zM896 735h1v1h-1zM896 760h1v3h-1zM896 786h1v1h-1zM922 129h1v1h-1zM922 155h1v1h-1zM922 180h1v1h-1zM922 205h1v1h-1zM922 230h1v1h-1zM922 255h1v3h-1zM922 281h1v1h-1zM922 306h1v1h-1zM922 331h1v1h-1zM922 357h1v1h-1zM922 382h1v1h-1zM922 407h1v1h-1zM922 432h1v1h-1zM922 458h1v1h-1zM922 483h1v1h-1zM922 507h1v3h-1zM922 533h1v1h-1zM922 559h1v1h-1zM922 584h1v1h-1zM922 609h1v1h-1zM922 634h1v1h-1zM922 660h1v1h-1zM922 685h1v1h-1zM922 710h1v1h-1zM922 735h1v1h-1zM922 760h1v3h-1zM922 786h1v1h-1zM947 129h1v1h-1zM947 155h1v1h-1zM947 180h1v1h-1zM947 205h1v1h-1zM947 230h1v1h-1zM947 255h1v3h-1zM947 281h1v1h-1zM947 306h1v1h-1zM947 331h1v1h-1zM947 357h1v1h-1zM947 382h1v1h-1zM947 407h1v1h-1zM947 432h1v1h-1zM947 458h1v1h-1zM947 483h1v1h-1zM947 507h1v3h-1zM947 533h1v1h-1zM947 559h1v1h-1zM947 584h1v1h-1zM947 609h1v1h-1zM947 634h1v1h-1zM947 660h1v1h-1zM947 685h1v1h-1zM947 710h1v1h-1zM947 735h1v1h-1zM947 760h1v3h-1zM947 786h1v1h-1z" fill="#a9aaa8"/>
<path d="M164.5 154.5H820.5V786.5H164.5Z M170.0 160.0V781.0H815.0V160.0Z" fill="url(#hatch)" fill-rule="evenodd"/>
<rect x="164.5" y="154.5" width="656.0" height="632.0" fill="none" stroke="#c83434" stroke-width="1.2"/>
<path d="M755.0 180.5 L767.4 185.0 L781.2 194.5 L791.6 208.2 L795.4 225.3 L795.4 691.2 A48 45 0 0 1 747.4 736.2 L262.8 736.2 A48 45 0 0 1 214.8 691.2 L214.8 225.3 L218.6 208.2 L229.0 194.5 L242.8 185.0 L255.2 180.5Z" fill="none" stroke="#d2d4d0" stroke-width="1.05"/>
<rect x="219.5" y="185.5" width="571" height="545.5" rx="42" fill="#8a4054"/>
<path d="M37 129h1v1h-1zM37 155h1v1h-1zM37 180h1v1h-1zM37 205h1v1h-1zM37 230h1v1h-1zM37 255h1v3h-1zM37 281h1v1h-1zM37 306h1v1h-1zM37 331h1v1h-1zM37 357h1v1h-1zM37 382h1v1h-1zM37 407h1v1h-1zM37 432h1v1h-1zM37 458h1v1h-1zM37 483h1v1h-1zM37 507h1v3h-1zM37 533h1v1h-1zM37 559h1v1h-1zM37 584h1v1h-1zM37 609h1v1h-1zM37 634h1v1h-1zM37 660h1v1h-1zM37 685h1v1h-1zM37 710h1v1h-1zM37 735h1v1h-1zM37 760h1v3h-1zM37 786h1v1h-1zM63 129h1v1h-1zM63 155h1v1h-1zM63 180h1v1h-1zM63 205h1v1h-1zM63 230h1v1h-1zM63 255h1v3h-1zM63 281h1v1h-1zM63 306h1v1h-1zM63 331h1v1h-1zM63 357h1v1h-1zM63 382h1v1h-1zM63 407h1v1h-1zM63 432h1v1h-1zM63 458h1v1h-1zM63 483h1v1h-1zM63 507h1v3h-1zM63 533h1v1h-1zM63 559h1v1h-1zM63 584h1v1h-1zM63 609h1v1h-1zM63 634h1v1h-1zM63 660h1v1h-1zM63 685h1v1h-1zM63 710h1v1h-1zM63 735h1v1h-1zM63 760h1v3h-1zM63 786h1v1h-1zM87 129h3v1h-3zM87 155h3v1h-3zM87 180h3v1h-3zM87 205h3v1h-3zM87 230h3v1h-3zM87 255h3v3h-3zM87 281h3v1h-3zM87 306h3v1h-3zM87 331h3v1h-3zM87 357h3v1h-3zM87 382h3v1h-3zM87 407h3v1h-3zM87 432h3v1h-3zM87 458h3v1h-3zM87 483h3v1h-3zM87 507h3v3h-3zM87 533h3v1h-3zM87 559h3v1h-3zM87 584h3v1h-3zM87 609h3v1h-3zM87 634h3v1h-3zM87 660h3v1h-3zM87 685h3v1h-3zM87 710h3v1h-3zM87 735h3v1h-3zM87 760h3v3h-3zM87 786h3v1h-3zM113 129h1v1h-1zM113 155h1v1h-1zM113 180h1v1h-1zM113 205h1v1h-1zM113 230h1v1h-1zM113 255h1v3h-1zM113 281h1v1h-1zM113 306h1v1h-1zM113 331h1v1h-1zM113 357h1v1h-1zM113 382h1v1h-1zM113 407h1v1h-1zM113 432h1v1h-1zM113 458h1v1h-1zM113 483h1v1h-1zM113 507h1v3h-1zM113 533h1v1h-1zM113 559h1v1h-1zM113 584h1v1h-1zM113 609h1v1h-1zM113 634h1v1h-1zM113 660h1v1h-1zM113 685h1v1h-1zM113 710h1v1h-1zM113 735h1v1h-1zM113 760h1v3h-1zM113 786h1v1h-1zM139 129h1v1h-1zM139 155h1v1h-1zM139 180h1v1h-1zM139 205h1v1h-1zM139 230h1v1h-1zM139 255h1v3h-1zM139 281h1v1h-1zM139 306h1v1h-1zM139 331h1v1h-1zM139 357h1v1h-1zM139 382h1v1h-1zM139 407h1v1h-1zM139 432h1v1h-1zM139 458h1v1h-1zM139 483h1v1h-1zM139 507h1v3h-1zM139 533h1v1h-1zM139 559h1v1h-1zM139 584h1v1h-1zM139 609h1v1h-1zM139 634h1v1h-1zM139 660h1v1h-1zM139 685h1v1h-1zM139 710h1v1h-1zM139 735h1v1h-1zM139 760h1v3h-1zM139 786h1v1h-1zM164 129h1v1h-1zM164 155h1v1h-1zM164 180h1v1h-1zM164 205h1v1h-1zM164 230h1v1h-1zM164 255h1v3h-1zM164 281h1v1h-1zM164 306h1v1h-1zM164 331h1v1h-1zM164 357h1v1h-1zM164 382h1v1h-1zM164 407h1v1h-1zM164 432h1v1h-1zM164 458h1v1h-1zM164 483h1v1h-1zM164 507h1v3h-1zM164 533h1v1h-1zM164 559h1v1h-1zM164 584h1v1h-1zM164 609h1v1h-1zM164 634h1v1h-1zM164 660h1v1h-1zM164 685h1v1h-1zM164 710h1v1h-1zM164 735h1v1h-1zM164 760h1v3h-1zM164 786h1v1h-1zM189 129h1v1h-1zM189 155h1v1h-1zM189 180h1v1h-1zM189 205h1v1h-1zM189 230h1v1h-1zM189 255h1v3h-1zM189 281h1v1h-1zM189 306h1v1h-1zM189 331h1v1h-1zM189 357h1v1h-1zM189 382h1v1h-1zM189 407h1v1h-1zM189 432h1v1h-1zM189 458h1v1h-1zM189 483h1v1h-1zM189 507h1v3h-1zM189 533h1v1h-1zM189 559h1v1h-1zM189 584h1v1h-1zM189 609h1v1h-1zM189 634h1v1h-1zM189 660h1v1h-1zM189 685h1v1h-1zM189 710h1v1h-1zM189 735h1v1h-1zM189 760h1v3h-1zM189 786h1v1h-1zM214 129h1v1h-1zM214 155h1v1h-1zM214 180h1v1h-1zM214 205h1v1h-1zM214 230h1v1h-1zM214 255h1v3h-1zM214 281h1v1h-1zM214 306h1v1h-1zM214 331h1v1h-1zM214 357h1v1h-1zM214 382h1v1h-1zM214 407h1v1h-1zM214 432h1v1h-1zM214 458h1v1h-1zM214 483h1v1h-1zM214 507h1v3h-1zM214 533h1v1h-1zM214 559h1v1h-1zM214 584h1v1h-1zM214 609h1v1h-1zM214 634h1v1h-1zM214 660h1v1h-1zM214 685h1v1h-1zM214 710h1v1h-1zM214 735h1v1h-1zM214 760h1v3h-1zM214 786h1v1h-1zM240 129h1v1h-1zM240 155h1v1h-1zM240 180h1v1h-1zM240 205h1v1h-1zM240 230h1v1h-1zM240 255h1v3h-1zM240 281h1v1h-1zM240 306h1v1h-1zM240 331h1v1h-1zM240 357h1v1h-1zM240 382h1v1h-1zM240 407h1v1h-1zM240 432h1v1h-1zM240 458h1v1h-1zM240 483h1v1h-1zM240 507h1v3h-1zM240 533h1v1h-1zM240 559h1v1h-1zM240 584h1v1h-1zM240 609h1v1h-1zM240 634h1v1h-1zM240 660h1v1h-1zM240 685h1v1h-1zM240 710h1v1h-1zM240 735h1v1h-1zM240 760h1v3h-1zM240 786h1v1h-1zM265 129h1v1h-1zM265 155h1v1h-1zM265 180h1v1h-1zM265 205h1v1h-1zM265 230h1v1h-1zM265 255h1v3h-1zM265 281h1v1h-1zM265 306h1v1h-1zM265 331h1v1h-1zM265 357h1v1h-1zM265 382h1v1h-1zM265 407h1v1h-1zM265 432h1v1h-1zM265 458h1v1h-1zM265 483h1v1h-1zM265 507h1v3h-1zM265 533h1v1h-1zM265 559h1v1h-1zM265 584h1v1h-1zM265 609h1v1h-1zM265 634h1v1h-1zM265 660h1v1h-1zM265 685h1v1h-1zM265 710h1v1h-1zM265 735h1v1h-1zM265 760h1v3h-1zM265 786h1v1h-1zM290 129h1v1h-1zM290 155h1v1h-1zM290 180h1v1h-1zM290 205h1v1h-1zM290 230h1v1h-1zM290 255h1v3h-1zM290 281h1v1h-1zM290 306h1v1h-1zM290 331h1v1h-1zM290 357h1v1h-1zM290 382h1v1h-1zM290 407h1v1h-1zM290 432h1v1h-1zM290 458h1v1h-1zM290 483h1v1h-1zM290 507h1v3h-1zM290 533h1v1h-1zM290 559h1v1h-1zM290 584h1v1h-1zM290 609h1v1h-1zM290 634h1v1h-1zM290 660h1v1h-1zM290 685h1v1h-1zM290 710h1v1h-1zM290 735h1v1h-1zM290 760h1v3h-1zM290 786h1v1h-1zM315 129h1v1h-1zM315 155h1v1h-1zM315 180h1v1h-1zM315 205h1v1h-1zM315 230h1v1h-1zM315 255h1v3h-1zM315 281h1v1h-1zM315 306h1v1h-1zM315 331h1v1h-1zM315 357h1v1h-1zM315 382h1v1h-1zM315 407h1v1h-1zM315 432h1v1h-1zM315 458h1v1h-1zM315 483h1v1h-1zM315 507h1v3h-1zM315 533h1v1h-1zM315 559h1v1h-1zM315 584h1v1h-1zM315 609h1v1h-1zM315 634h1v1h-1zM315 660h1v1h-1zM315 685h1v1h-1zM315 710h1v1h-1zM315 735h1v1h-1zM315 760h1v3h-1zM315 786h1v1h-1zM340 129h3v1h-3zM340 155h3v1h-3zM340 180h3v1h-3zM340 205h3v1h-3zM340 230h3v1h-3zM340 255h3v3h-3zM340 281h3v1h-3zM340 306h3v1h-3zM340 331h3v1h-3zM340 357h3v1h-3zM340 382h3v1h-3zM340 407h3v1h-3zM340 432h3v1h-3zM340 458h3v1h-3zM340 483h3v1h-3zM340 507h3v3h-3zM340 533h3v1h-3zM340 559h3v1h-3zM340 584h3v1h-3zM340 609h3v1h-3zM340 634h3v1h-3zM340 660h3v1h-3zM340 685h3v1h-3zM340 710h3v1h-3zM340 735h3v1h-3zM340 760h3v3h-3zM340 786h3v1h-3zM366 129h1v1h-1zM366 155h1v1h-1zM366 180h1v1h-1zM366 205h1v1h-1zM366 230h1v1h-1zM366 255h1v3h-1zM366 281h1v1h-1zM366 306h1v1h-1zM366 331h1v1h-1zM366 357h1v1h-1zM366 382h1v1h-1zM366 407h1v1h-1zM366 432h1v1h-1zM366 458h1v1h-1zM366 483h1v1h-1zM366 507h1v3h-1zM366 533h1v1h-1zM366 559h1v1h-1zM366 584h1v1h-1zM366 609h1v1h-1zM366 634h1v1h-1zM366 660h1v1h-1zM366 685h1v1h-1zM366 710h1v1h-1zM366 735h1v1h-1zM366 760h1v3h-1zM366 786h1v1h-1zM391 129h1v1h-1zM391 155h1v1h-1zM391 180h1v1h-1zM391 205h1v1h-1zM391 230h1v1h-1zM391 255h1v3h-1zM391 281h1v1h-1zM391 306h1v1h-1zM391 331h1v1h-1zM391 357h1v1h-1zM391 382h1v1h-1zM391 407h1v1h-1zM391 432h1v1h-1zM391 458h1v1h-1zM391 483h1v1h-1zM391 507h1v3h-1zM391 533h1v1h-1zM391 559h1v1h-1zM391 584h1v1h-1zM391 609h1v1h-1zM391 634h1v1h-1zM391 660h1v1h-1zM391 685h1v1h-1zM391 710h1v1h-1zM391 735h1v1h-1zM391 760h1v3h-1zM391 786h1v1h-1zM416 129h1v1h-1zM416 155h1v1h-1zM416 180h1v1h-1zM416 205h1v1h-1zM416 230h1v1h-1zM416 255h1v3h-1zM416 281h1v1h-1zM416 306h1v1h-1zM416 331h1v1h-1zM416 357h1v1h-1zM416 382h1v1h-1zM416 407h1v1h-1zM416 432h1v1h-1zM416 458h1v1h-1zM416 483h1v1h-1zM416 507h1v3h-1zM416 533h1v1h-1zM416 559h1v1h-1zM416 584h1v1h-1zM416 609h1v1h-1zM416 634h1v1h-1zM416 660h1v1h-1zM416 685h1v1h-1zM416 710h1v1h-1zM416 735h1v1h-1zM416 760h1v3h-1zM416 786h1v1h-1zM442 129h1v1h-1zM442 155h1v1h-1zM442 180h1v1h-1zM442 205h1v1h-1zM442 230h1v1h-1zM442 255h1v3h-1zM442 281h1v1h-1zM442 306h1v1h-1zM442 331h1v1h-1zM442 357h1v1h-1zM442 382h1v1h-1zM442 407h1v1h-1zM442 432h1v1h-1zM442 458h1v1h-1zM442 483h1v1h-1zM442 507h1v3h-1zM442 533h1v1h-1zM442 559h1v1h-1zM442 584h1v1h-1zM442 609h1v1h-1zM442 634h1v1h-1zM442 660h1v1h-1zM442 685h1v1h-1zM442 710h1v1h-1zM442 735h1v1h-1zM442 760h1v3h-1zM442 786h1v1h-1zM467 129h1v1h-1zM467 155h1v1h-1zM467 180h1v1h-1zM467 205h1v1h-1zM467 230h1v1h-1zM467 255h1v3h-1zM467 281h1v1h-1zM467 306h1v1h-1zM467 331h1v1h-1zM467 357h1v1h-1zM467 382h1v1h-1zM467 407h1v1h-1zM467 432h1v1h-1zM467 458h1v1h-1zM467 483h1v1h-1zM467 507h1v3h-1zM467 533h1v1h-1zM467 559h1v1h-1zM467 584h1v1h-1zM467 609h1v1h-1zM467 634h1v1h-1zM467 660h1v1h-1zM467 685h1v1h-1zM467 710h1v1h-1zM467 735h1v1h-1zM467 760h1v3h-1zM467 786h1v1h-1zM492 129h1v1h-1zM492 155h1v1h-1zM492 180h1v1h-1zM492 205h1v1h-1zM492 230h1v1h-1zM492 255h1v3h-1zM492 281h1v1h-1zM492 306h1v1h-1zM492 331h1v1h-1zM492 357h1v1h-1zM492 382h1v1h-1zM492 407h1v1h-1zM492 432h1v1h-1zM492 458h1v1h-1zM492 483h1v1h-1zM492 507h1v3h-1zM492 533h1v1h-1zM492 559h1v1h-1zM492 584h1v1h-1zM492 609h1v1h-1zM492 634h1v1h-1zM492 660h1v1h-1zM492 685h1v1h-1zM492 710h1v1h-1zM492 735h1v1h-1zM492 760h1v3h-1zM492 786h1v1h-1zM517 129h1v1h-1zM517 155h1v1h-1zM517 180h1v1h-1zM517 205h1v1h-1zM517 230h1v1h-1zM517 255h1v3h-1zM517 281h1v1h-1zM517 306h1v1h-1zM517 331h1v1h-1zM517 357h1v1h-1zM517 382h1v1h-1zM517 407h1v1h-1zM517 432h1v1h-1zM517 458h1v1h-1zM517 483h1v1h-1zM517 507h1v3h-1zM517 533h1v1h-1zM517 559h1v1h-1zM517 584h1v1h-1zM517 609h1v1h-1zM517 634h1v1h-1zM517 660h1v1h-1zM517 685h1v1h-1zM517 710h1v1h-1zM517 735h1v1h-1zM517 760h1v3h-1zM517 786h1v1h-1zM543 129h1v1h-1zM543 155h1v1h-1zM543 180h1v1h-1zM543 205h1v1h-1zM543 230h1v1h-1zM543 255h1v3h-1zM543 281h1v1h-1zM543 306h1v1h-1zM543 331h1v1h-1zM543 357h1v1h-1zM543 382h1v1h-1zM543 407h1v1h-1zM543 432h1v1h-1zM543 458h1v1h-1zM543 483h1v1h-1zM543 507h1v3h-1zM543 533h1v1h-1zM543 559h1v1h-1zM543 584h1v1h-1zM543 609h1v1h-1zM543 634h1v1h-1zM543 660h1v1h-1zM543 685h1v1h-1zM543 710h1v1h-1zM543 735h1v1h-1zM543 760h1v3h-1zM543 786h1v1h-1zM568 129h1v1h-1zM568 155h1v1h-1zM568 180h1v1h-1zM568 205h1v1h-1zM568 230h1v1h-1zM568 255h1v3h-1zM568 281h1v1h-1zM568 306h1v1h-1zM568 331h1v1h-1zM568 357h1v1h-1zM568 382h1v1h-1zM568 407h1v1h-1zM568 432h1v1h-1zM568 458h1v1h-1zM568 483h1v1h-1zM568 507h1v3h-1zM568 533h1v1h-1zM568 559h1v1h-1zM568 584h1v1h-1zM568 609h1v1h-1zM568 634h1v1h-1zM568 660h1v1h-1zM568 685h1v1h-1zM568 710h1v1h-1zM568 735h1v1h-1zM568 760h1v3h-1zM568 786h1v1h-1zM592 129h3v1h-3zM592 155h3v1h-3zM592 180h3v1h-3zM592 205h3v1h-3zM592 230h3v1h-3zM592 255h3v3h-3zM592 281h3v1h-3zM592 306h3v1h-3zM592 331h3v1h-3zM592 357h3v1h-3zM592 382h3v1h-3zM592 407h3v1h-3zM592 432h3v1h-3zM592 458h3v1h-3zM592 483h3v1h-3zM592 507h3v3h-3zM592 533h3v1h-3zM592 559h3v1h-3zM592 584h3v1h-3zM592 609h3v1h-3zM592 634h3v1h-3zM592 660h3v1h-3zM592 685h3v1h-3zM592 710h3v1h-3zM592 735h3v1h-3zM592 760h3v3h-3zM592 786h3v1h-3zM618 129h1v1h-1zM618 155h1v1h-1zM618 180h1v1h-1zM618 205h1v1h-1zM618 230h1v1h-1zM618 255h1v3h-1zM618 281h1v1h-1zM618 306h1v1h-1zM618 331h1v1h-1zM618 357h1v1h-1zM618 382h1v1h-1zM618 407h1v1h-1zM618 432h1v1h-1zM618 458h1v1h-1zM618 483h1v1h-1zM618 507h1v3h-1zM618 533h1v1h-1zM618 559h1v1h-1zM618 584h1v1h-1zM618 609h1v1h-1zM618 634h1v1h-1zM618 660h1v1h-1zM618 685h1v1h-1zM618 710h1v1h-1zM618 735h1v1h-1zM618 760h1v3h-1zM618 786h1v1h-1zM644 129h1v1h-1zM644 155h1v1h-1zM644 180h1v1h-1zM644 205h1v1h-1zM644 230h1v1h-1zM644 255h1v3h-1zM644 281h1v1h-1zM644 306h1v1h-1zM644 331h1v1h-1zM644 357h1v1h-1zM644 382h1v1h-1zM644 407h1v1h-1zM644 432h1v1h-1zM644 458h1v1h-1zM644 483h1v1h-1zM644 507h1v3h-1zM644 533h1v1h-1zM644 559h1v1h-1zM644 584h1v1h-1zM644 609h1v1h-1zM644 634h1v1h-1zM644 660h1v1h-1zM644 685h1v1h-1zM644 710h1v1h-1zM644 735h1v1h-1zM644 760h1v3h-1zM644 786h1v1h-1zM669 129h1v1h-1zM669 155h1v1h-1zM669 180h1v1h-1zM669 205h1v1h-1zM669 230h1v1h-1zM669 255h1v3h-1zM669 281h1v1h-1zM669 306h1v1h-1zM669 331h1v1h-1zM669 357h1v1h-1zM669 382h1v1h-1zM669 407h1v1h-1zM669 432h1v1h-1zM669 458h1v1h-1zM669 483h1v1h-1zM669 507h1v3h-1zM669 533h1v1h-1zM669 559h1v1h-1zM669 584h1v1h-1zM669 609h1v1h-1zM669 634h1v1h-1zM669 660h1v1h-1zM669 685h1v1h-1zM669 710h1v1h-1zM669 735h1v1h-1zM669 760h1v3h-1zM669 786h1v1h-1zM694 129h1v1h-1zM694 155h1v1h-1zM694 180h1v1h-1zM694 205h1v1h-1zM694 230h1v1h-1zM694 255h1v3h-1zM694 281h1v1h-1zM694 306h1v1h-1zM694 331h1v1h-1zM694 357h1v1h-1zM694 382h1v1h-1zM694 407h1v1h-1zM694 432h1v1h-1zM694 458h1v1h-1zM694 483h1v1h-1zM694 507h1v3h-1zM694 533h1v1h-1zM694 559h1v1h-1zM694 584h1v1h-1zM694 609h1v1h-1zM694 634h1v1h-1zM694 660h1v1h-1zM694 685h1v1h-1zM694 710h1v1h-1zM694 735h1v1h-1zM694 760h1v3h-1zM694 786h1v1h-1zM720 129h1v1h-1zM720 155h1v1h-1zM720 180h1v1h-1zM720 205h1v1h-1zM720 230h1v1h-1zM720 255h1v3h-1zM720 281h1v1h-1zM720 306h1v1h-1zM720 331h1v1h-1zM720 357h1v1h-1zM720 382h1v1h-1zM720 407h1v1h-1zM720 432h1v1h-1zM720 458h1v1h-1zM720 483h1v1h-1zM720 507h1v3h-1zM720 533h1v1h-1zM720 559h1v1h-1zM720 584h1v1h-1zM720 609h1v1h-1zM720 634h1v1h-1zM720 660h1v1h-1zM720 685h1v1h-1zM720 710h1v1h-1zM720 735h1v1h-1zM720 760h1v3h-1zM720 786h1v1h-1zM745 129h1v1h-1zM745 155h1v1h-1zM745 180h1v1h-1zM745 205h1v1h-1zM745 230h1v1h-1zM745 255h1v3h-1zM745 281h1v1h-1zM745 306h1v1h-1zM745 331h1v1h-1zM745 357h1v1h-1zM745 382h1v1h-1zM745 407h1v1h-1zM745 432h1v1h-1zM745 458h1v1h-1zM745 483h1v1h-1zM745 507h1v3h-1zM745 533h1v1h-1zM745 559h1v1h-1zM745 584h1v1h-1zM745 609h1v1h-1zM745 634h1v1h-1zM745 660h1v1h-1zM745 685h1v1h-1zM745 710h1v1h-1zM745 735h1v1h-1zM745 760h1v3h-1zM745 786h1v1h-1zM770 129h1v1h-1zM770 155h1v1h-1zM770 180h1v1h-1zM770 205h1v1h-1zM770 230h1v1h-1zM770 255h1v3h-1zM770 281h1v1h-1zM770 306h1v1h-1zM770 331h1v1h-1zM770 357h1v1h-1zM770 382h1v1h-1zM770 407h1v1h-1zM770 432h1v1h-1zM770 458h1v1h-1zM770 483h1v1h-1zM770 507h1v3h-1zM770 533h1v1h-1zM770 559h1v1h-1zM770 584h1v1h-1zM770 609h1v1h-1zM770 634h1v1h-1zM770 660h1v1h-1zM770 685h1v1h-1zM770 710h1v1h-1zM770 735h1v1h-1zM770 760h1v3h-1zM770 786h1v1h-1zM795 129h1v1h-1zM795 155h1v1h-1zM795 180h1v1h-1zM795 205h1v1h-1zM795 230h1v1h-1zM795 255h1v3h-1zM795 281h1v1h-1zM795 306h1v1h-1zM795 331h1v1h-1zM795 357h1v1h-1zM795 382h1v1h-1zM795 407h1v1h-1zM795 432h1v1h-1zM795 458h1v1h-1zM795 483h1v1h-1zM795 507h1v3h-1zM795 533h1v1h-1zM795 559h1v1h-1zM795 584h1v1h-1zM795 609h1v1h-1zM795 634h1v1h-1zM795 660h1v1h-1zM795 685h1v1h-1zM795 710h1v1h-1zM795 735h1v1h-1zM795 760h1v3h-1zM795 786h1v1h-1zM821 129h1v1h-1zM821 155h1v1h-1zM821 180h1v1h-1zM821 205h1v1h-1zM821 230h1v1h-1zM821 255h1v3h-1zM821 281h1v1h-1zM821 306h1v1h-1zM821 331h1v1h-1zM821 357h1v1h-1zM821 382h1v1h-1zM821 407h1v1h-1zM821 432h1v1h-1zM821 458h1v1h-1zM821 483h1v1h-1zM821 507h1v3h-1zM821 533h1v1h-1zM821 559h1v1h-1zM821 584h1v1h-1zM821 609h1v1h-1zM821 634h1v1h-1zM821 660h1v1h-1zM821 685h1v1h-1zM821 710h1v1h-1zM821 735h1v1h-1zM821 760h1v3h-1zM821 786h1v1h-1zM845 129h3v1h-3zM845 155h3v1h-3zM845 180h3v1h-3zM845 205h3v1h-3zM845 230h3v1h-3zM845 255h3v3h-3zM845 281h3v1h-3zM845 306h3v1h-3zM845 331h3v1h-3zM845 357h3v1h-3zM845 382h3v1h-3zM845 407h3v1h-3zM845 432h3v1h-3zM845 458h3v1h-3zM845 483h3v1h-3zM845 507h3v3h-3zM845 533h3v1h-3zM845 559h3v1h-3zM845 584h3v1h-3zM845 609h3v1h-3zM845 634h3v1h-3zM845 660h3v1h-3zM845 685h3v1h-3zM845 710h3v1h-3zM845 735h3v1h-3zM845 760h3v3h-3zM845 786h3v1h-3zM871 129h1v1h-1zM871 155h1v1h-1zM871 180h1v1h-1zM871 205h1v1h-1zM871 230h1v1h-1zM871 255h1v3h-1zM871 281h1v1h-1zM871 306h1v1h-1zM871 331h1v1h-1zM871 357h1v1h-1zM871 382h1v1h-1zM871 407h1v1h-1zM871 432h1v1h-1zM871 458h1v1h-1zM871 483h1v1h-1zM871 507h1v3h-1zM871 533h1v1h-1zM871 559h1v1h-1zM871 584h1v1h-1zM871 609h1v1h-1zM871 634h1v1h-1zM871 660h1v1h-1zM871 685h1v1h-1zM871 710h1v1h-1zM871 735h1v1h-1zM871 760h1v3h-1zM871 786h1v1h-1zM896 129h1v1h-1zM896 155h1v1h-1zM896 180h1v1h-1zM896 205h1v1h-1zM896 230h1v1h-1zM896 255h1v3h-1zM896 281h1v1h-1zM896 306h1v1h-1zM896 331h1v1h-1zM896 357h1v1h-1zM896 382h1v1h-1zM896 407h1v1h-1zM896 432h1v1h-1zM896 458h1v1h-1zM896 483h1v1h-1zM896 507h1v3h-1zM896 533h1v1h-1zM896 559h1v1h-1zM896 584h1v1h-1zM896 609h1v1h-1zM896 634h1v1h-1zM896 660h1v1h-1zM896 685h1v1h-1zM896 710h1v1h-1zM896 735h1v1h-1zM896 760h1v3h-1zM896 786h1v1h-1zM922 129h1v1h-1zM922 155h1v1h-1zM922 180h1v1h-1zM922 205h1v1h-1zM922 230h1v1h-1zM922 255h1v3h-1zM922 281h1v1h-1zM922 306h1v1h-1zM922 331h1v1h-1zM922 357h1v1h-1zM922 382h1v1h-1zM922 407h1v1h-1zM922 432h1v1h-1zM922 458h1v1h-1zM922 483h1v1h-1zM922 507h1v3h-1zM922 533h1v1h-1zM922 559h1v1h-1zM922 584h1v1h-1zM922 609h1v1h-1zM922 634h1v1h-1zM922 660h1v1h-1zM922 685h1v1h-1zM922 710h1v1h-1zM922 735h1v1h-1zM922 760h1v3h-1zM922 786h1v1h-1zM947 129h1v1h-1zM947 155h1v1h-1zM947 180h1v1h-1zM947 205h1v1h-1zM947 230h1v1h-1zM947 255h1v3h-1zM947 281h1v1h-1zM947 306h1v1h-1zM947 331h1v1h-1zM947 357h1v1h-1zM947 382h1v1h-1zM947 407h1v1h-1zM947 432h1v1h-1zM947 458h1v1h-1zM947 483h1v1h-1zM947 507h1v3h-1zM947 533h1v1h-1zM947 559h1v1h-1zM947 584h1v1h-1zM947 609h1v1h-1zM947 634h1v1h-1zM947 660h1v1h-1zM947 685h1v1h-1zM947 710h1v1h-1zM947 735h1v1h-1zM947 760h1v3h-1zM947 786h1v1h-1z" fill="#a25a6c" clip-path="url(#zc)"/>
<clipPath id="zc"><rect x="219.5" y="185.5" width="571" height="545.5" rx="42"/></clipPath>
<path d="M373 433 L618 433" fill="none" stroke="#78232e" stroke-width="11.5" stroke-linecap="butt" stroke-linejoin="round"/>
<path d="M492 433 L590 335" fill="none" stroke="#78232e" stroke-width="11.5" stroke-linecap="butt" stroke-linejoin="round"/>
<path d="M492 433 L619 560" fill="none" stroke="#78232e" stroke-width="11.5" stroke-linecap="butt" stroke-linejoin="round"/>
<path d="M543 458 L645 560" fill="none" stroke="#78232e" stroke-width="11.5" stroke-linecap="butt" stroke-linejoin="round"/>
<path d="M373 433 L618 433" fill="none" stroke="#9a4f6b" stroke-width="2"/>
<path d="M492 433 L590 335" fill="none" stroke="#9a4f6b" stroke-width="2"/>
<path d="M492 433 L619 560" fill="none" stroke="#9a4f6b" stroke-width="2"/>
<path d="M543 458 L645 560" fill="none" stroke="#9a4f6b" stroke-width="2"/>
<mask id="fm"><rect x="0" y="0" width="1072" height="844" fill="black"/>
<path d="M373 433 L618 433" fill="none" stroke="white" stroke-width="11.5" stroke-linecap="round"/>
<path d="M492 433 L590 335" fill="none" stroke="white" stroke-width="11.5" stroke-linecap="round"/>
<path d="M492 433 L619 560" fill="none" stroke="white" stroke-width="11.5" stroke-linecap="round"/>
<path d="M543 458 L645 560" fill="none" stroke="white" stroke-width="11.5" stroke-linecap="round"/>
</mask>
<path d="M341 433 L358 433 L434 357" fill="none" stroke="#2f5a8e" stroke-width="12" stroke-linejoin="round"/>
<path d="M341 459 L360 459 L434 533" fill="none" stroke="#2f5a8e" stroke-width="12" stroke-linejoin="round"/>
<path d="M434 355 L499 355" fill="none" stroke="#2f5a8e" stroke-width="12" stroke-linejoin="round"/>
<path d="M434 400 L499 400" fill="none" stroke="#2f5a8e" stroke-width="12" stroke-linejoin="round"/>
<path d="M434 533 L499 533" fill="none" stroke="#2f5a8e" stroke-width="12" stroke-linejoin="round"/>
<path d="M434 577 L499 577" fill="none" stroke="#2f5a8e" stroke-width="12" stroke-linejoin="round"/>
<path d="M499 400 L543 444 L543 458" fill="none" stroke="#2f5a8e" stroke-width="12" stroke-linejoin="round"/>
<path d="M499 577 L644 432" fill="none" stroke="#2f5a8e" stroke-width="12" stroke-linejoin="round"/>
<path d="M644 356 L618 382 L595 382 L568 409 L568 508" fill="none" stroke="#2f5a8e" stroke-width="12" stroke-linejoin="round"/>
<path d="M341 433 L358 433 L434 357" fill="none" stroke="#001023" stroke-width="10" stroke-linejoin="round" mask="url(#fm)"/>
<path d="M341 459 L360 459 L434 533" fill="none" stroke="#001023" stroke-width="10" stroke-linejoin="round" mask="url(#fm)"/>
<path d="M434 355 L499 355" fill="none" stroke="#001023" stroke-width="10" stroke-linejoin="round" mask="url(#fm)"/>
<path d="M434 400 L499 400" fill="none" stroke="#001023" stroke-width="10" stroke-linejoin="round" mask="url(#fm)"/>
<path d="M434 533 L499 533" fill="none" stroke="#001023" stroke-width="10" stroke-linejoin="round" mask="url(#fm)"/>
<path d="M434 577 L499 577" fill="none" stroke="#001023" stroke-width="10" stroke-linejoin="round" mask="url(#fm)"/>
<path d="M499 400 L543 444 L543 458" fill="none" stroke="#001023" stroke-width="10" stroke-linejoin="round" mask="url(#fm)"/>
<path d="M499 577 L644 432" fill="none" stroke="#001023" stroke-width="10" stroke-linejoin="round" mask="url(#fm)"/>
<path d="M644 356 L618 382 L595 382 L568 409 L568 508" fill="none" stroke="#001023" stroke-width="10" stroke-linejoin="round" mask="url(#fm)"/>
<path d="M341 433 L358 433 L434 357" fill="none" stroke="#d03434" stroke-width="1.8" stroke-linejoin="round"/>
<path d="M341 459 L360 459 L434 533" fill="none" stroke="#d03434" stroke-width="1.8" stroke-linejoin="round"/>
<path d="M434 355 L499 355" fill="none" stroke="#d03434" stroke-width="1.8" stroke-linejoin="round"/>
<path d="M434 400 L499 400" fill="none" stroke="#d03434" stroke-width="1.8" stroke-linejoin="round"/>
<path d="M434 533 L499 533" fill="none" stroke="#d03434" stroke-width="1.8" stroke-linejoin="round"/>
<path d="M434 577 L499 577" fill="none" stroke="#d03434" stroke-width="1.8" stroke-linejoin="round"/>
<path d="M499 400 L543 444 L543 458" fill="none" stroke="#d03434" stroke-width="1.8" stroke-linejoin="round"/>
<path d="M499 577 L644 432" fill="none" stroke="#d03434" stroke-width="1.8" stroke-linejoin="round"/>
<path d="M644 356 L618 382 L595 382 L568 409 L568 508" fill="none" stroke="#d03434" stroke-width="1.8" stroke-linejoin="round"/>
<circle cx="290.4" cy="255.6" r="26.5" fill="none" stroke="#e0308a" stroke-width="1.1"/>
<circle cx="290.4" cy="255.6" r="25.3" fill="none" stroke="#a0688a" stroke-width="0.9"/>
<circle cx="290.4" cy="255.6" r="15.1" fill="#b83040"/>
<circle cx="290.4" cy="255.6" r="14.4" fill="#020a16"/>
<circle cx="290.4" cy="255.6" r="13" fill="#22c0d2"/>
<circle cx="719.6" cy="256" r="26.5" fill="none" stroke="#e0308a" stroke-width="1.1"/>
<circle cx="719.6" cy="256" r="25.3" fill="none" stroke="#a0688a" stroke-width="0.9"/>
<circle cx="719.6" cy="256" r="15.1" fill="#b83040"/>
<circle cx="719.6" cy="256" r="14.4" fill="#020a16"/>
<circle cx="719.6" cy="256" r="13" fill="#22c0d2"/>
<circle cx="290.4" cy="660.4" r="26.5" fill="none" stroke="#e0308a" stroke-width="1.1"/>
<circle cx="290.4" cy="660.4" r="25.3" fill="none" stroke="#a0688a" stroke-width="0.9"/>
<circle cx="290.4" cy="660.4" r="15.1" fill="#b83040"/>
<circle cx="290.4" cy="660.4" r="14.4" fill="#020a16"/>
<circle cx="290.4" cy="660.4" r="13" fill="#22c0d2"/>
<circle cx="719.4" cy="660.4" r="26.5" fill="none" stroke="#e0308a" stroke-width="1.1"/>
<circle cx="719.4" cy="660.4" r="25.3" fill="none" stroke="#a0688a" stroke-width="0.9"/>
<circle cx="719.4" cy="660.4" r="15.1" fill="#b83040"/>
<circle cx="719.4" cy="660.4" r="14.4" fill="#020a16"/>
<circle cx="719.4" cy="660.4" r="13" fill="#22c0d2"/>
<g transform="translate(282.20,226.80) scale(1.0300)" fill="none" stroke="#e39a6c" stroke-width="0.95" stroke-linecap="round" stroke-linejoin="round" opacity="1.0"><path vector-effect="non-scaling-stroke" transform="translate(0.00,0) scale(1.05,1)" d="M0 0V-10M5.5 0V-10M0 -5.2H5.5"/><path vector-effect="non-scaling-stroke" transform="translate(13.21,0) scale(1.05,1)" d="M0 -8L2.4 -10V0"/></g>
<g transform="translate(711.70,226.80) scale(1.0300)" fill="none" stroke="#e39a6c" stroke-width="0.95" stroke-linecap="round" stroke-linejoin="round" opacity="1.0"><path vector-effect="non-scaling-stroke" transform="translate(0.00,0) scale(1.05,1)" d="M0 0V-10M5.5 0V-10M0 -5.2H5.5"/><path vector-effect="non-scaling-stroke" transform="translate(10.27,0) scale(1.05,1)" d="M0.2 -8.4A2.6 2.6 0 0 1 5 -7.4Q5 -6.2 4 -5.1L0 0H5.2"/></g>
<g transform="translate(282.20,630.20) scale(1.0300)" fill="none" stroke="#e39a6c" stroke-width="0.95" stroke-linecap="round" stroke-linejoin="round" opacity="1.0"><path vector-effect="non-scaling-stroke" transform="translate(0.00,0) scale(1.05,1)" d="M0 0V-10M5.5 0V-10M0 -5.2H5.5"/><path vector-effect="non-scaling-stroke" transform="translate(10.27,0) scale(1.05,1)" d="M0.2 -10H5L2.2 -6H3A3 3 0 0 1 3 0H2Q0.8 0 0 -0.8"/></g>
<g transform="translate(712.40,630.20) scale(1.0300)" fill="none" stroke="#e39a6c" stroke-width="0.95" stroke-linecap="round" stroke-linejoin="round" opacity="1.0"><path vector-effect="non-scaling-stroke" transform="translate(0.00,0) scale(1.05,1)" d="M0 0V-10M5.5 0V-10M0 -5.2H5.5"/><path vector-effect="non-scaling-stroke" transform="translate(9.95,0) scale(1.05,1)" d="M4 0V-10L0 -3H5.5"/></g>
<g transform="translate(242.30,295.60) scale(1.0300)" fill="none" stroke="#c97a6a" stroke-width="0.95" stroke-linecap="round" stroke-linejoin="round" opacity="1.0"><path vector-effect="non-scaling-stroke" transform="translate(0.00,0) scale(1.0,1)" d="M0 0V-10L2.8 -4L5.6 -10V0"/><path vector-effect="non-scaling-stroke" transform="translate(9.57,0) scale(1.0,1)" d="M0 -4.1A2.4 2.4 0 0 1 4.8 -4.1V-2.4A2.4 2.4 0 0 1 0 -2.4Z"/><path vector-effect="non-scaling-stroke" transform="translate(18.35,0) scale(1.0,1)" d="M0 -6.5V-2.4A2.4 2.4 0 0 0 4.8 -2.4M4.8 -6.5V0"/><path vector-effect="non-scaling-stroke" transform="translate(27.12,0) scale(1.0,1)" d="M0 -6.5V0M0 -4.1A2.4 2.4 0 0 1 4.8 -4.1V0"/><path vector-effect="non-scaling-stroke" transform="translate(35.89,0) scale(1.0,1)" d="M1.4 -10V-1.6A1.6 1.6 0 0 0 3 0H4M0 -6.5H4"/><path vector-effect="non-scaling-stroke" transform="translate(43.86,0) scale(1.0,1)" d="M0 -6.5V0M0 -9.6V-9.5"/><path vector-effect="non-scaling-stroke" transform="translate(47.84,0) scale(1.0,1)" d="M0 -6.5V0M0 -4.1A2.4 2.4 0 0 1 4.8 -4.1V0"/><path vector-effect="non-scaling-stroke" transform="translate(56.61,0) scale(1.0,1)" d="M4.8 -6.5V1.1A2.4 2.4 0 0 1 2.4 3.5H1M4.8 -4.1A2.4 2.4 0 0 0 0 -4.1V-2.4A2.4 2.4 0 0 0 4.8 -2.4"/><path vector-effect="non-scaling-stroke" transform="translate(65.38,0) scale(1.0,1)" d="M0 0V-10M5.5 0V-10M0 -5.2H5.5"/><path vector-effect="non-scaling-stroke" transform="translate(74.85,0) scale(1.0,1)" d="M0 -4.1A2.4 2.4 0 0 1 4.8 -4.1V-2.4A2.4 2.4 0 0 1 0 -2.4Z"/><path vector-effect="non-scaling-stroke" transform="translate(83.63,0) scale(1.0,1)" d="M0 -10V-1A1 1 0 0 0 1 0"/><path vector-effect="non-scaling-stroke" transform="translate(88.60,0) scale(1.0,1)" d="M0.1 -3.3H4.8V-4.1A2.4 2.4 0 0 0 0 -4.1V-2.4A2.4 2.4 0 0 0 2.4 0H4.4"/></g>
<g transform="translate(672.20,295.60) scale(1.0300)" fill="none" stroke="#c97a6a" stroke-width="0.95" stroke-linecap="round" stroke-linejoin="round" opacity="1.0"><path vector-effect="non-scaling-stroke" transform="translate(0.00,0) scale(1.0,1)" d="M0 0V-10L2.8 -4L5.6 -10V0"/><path vector-effect="non-scaling-stroke" transform="translate(9.57,0) scale(1.0,1)" d="M0 -4.1A2.4 2.4 0 0 1 4.8 -4.1V-2.4A2.4 2.4 0 0 1 0 -2.4Z"/><path vector-effect="non-scaling-stroke" transform="translate(18.35,0) scale(1.0,1)" d="M0 -6.5V-2.4A2.4 2.4 0 0 0 4.8 -2.4M4.8 -6.5V0"/><path vector-effect="non-scaling-stroke" transform="translate(27.12,0) scale(1.0,1)" d="M0 -6.5V0M0 -4.1A2.4 2.4 0 0 1 4.8 -4.1V0"/><path vector-effect="non-scaling-stroke" transform="translate(35.89,0) scale(1.0,1)" d="M1.4 -10V-1.6A1.6 1.6 0 0 0 3 0H4M0 -6.5H4"/><path vector-effect="non-scaling-stroke" transform="translate(43.86,0) scale(1.0,1)" d="M0 -6.5V0M0 -9.6V-9.5"/><path vector-effect="non-scaling-stroke" transform="translate(47.84,0) scale(1.0,1)" d="M0 -6.5V0M0 -4.1A2.4 2.4 0 0 1 4.8 -4.1V0"/><path vector-effect="non-scaling-stroke" transform="translate(56.61,0) scale(1.0,1)" d="M4.8 -6.5V1.1A2.4 2.4 0 0 1 2.4 3.5H1M4.8 -4.1A2.4 2.4 0 0 0 0 -4.1V-2.4A2.4 2.4 0 0 0 4.8 -2.4"/><path vector-effect="non-scaling-stroke" transform="translate(65.38,0) scale(1.0,1)" d="M0 0V-10M5.5 0V-10M0 -5.2H5.5"/><path vector-effect="non-scaling-stroke" transform="translate(74.85,0) scale(1.0,1)" d="M0 -4.1A2.4 2.4 0 0 1 4.8 -4.1V-2.4A2.4 2.4 0 0 1 0 -2.4Z"/><path vector-effect="non-scaling-stroke" transform="translate(83.63,0) scale(1.0,1)" d="M0 -10V-1A1 1 0 0 0 1 0"/><path vector-effect="non-scaling-stroke" transform="translate(88.60,0) scale(1.0,1)" d="M0.1 -3.3H4.8V-4.1A2.4 2.4 0 0 0 0 -4.1V-2.4A2.4 2.4 0 0 0 2.4 0H4.4"/></g>
<g transform="translate(242.30,700.20) scale(1.0300)" fill="none" stroke="#c97a6a" stroke-width="0.95" stroke-linecap="round" stroke-linejoin="round" opacity="1.0"><path vector-effect="non-scaling-stroke" transform="translate(0.00,0) scale(1.0,1)" d="M0 0V-10L2.8 -4L5.6 -10V0"/><path vector-effect="non-scaling-stroke" transform="translate(9.57,0) scale(1.0,1)" d="M0 -4.1A2.4 2.4 0 0 1 4.8 -4.1V-2.4A2.4 2.4 0 0 1 0 -2.4Z"/><path vector-effect="non-scaling-stroke" transform="translate(18.35,0) scale(1.0,1)" d="M0 -6.5V-2.4A2.4 2.4 0 0 0 4.8 -2.4M4.8 -6.5V0"/><path vector-effect="non-scaling-stroke" transform="translate(27.12,0) scale(1.0,1)" d="M0 -6.5V0M0 -4.1A2.4 2.4 0 0 1 4.8 -4.1V0"/><path vector-effect="non-scaling-stroke" transform="translate(35.89,0) scale(1.0,1)" d="M1.4 -10V-1.6A1.6 1.6 0 0 0 3 0H4M0 -6.5H4"/><path vector-effect="non-scaling-stroke" transform="translate(43.86,0) scale(1.0,1)" d="M0 -6.5V0M0 -9.6V-9.5"/><path vector-effect="non-scaling-stroke" transform="translate(47.84,0) scale(1.0,1)" d="M0 -6.5V0M0 -4.1A2.4 2.4 0 0 1 4.8 -4.1V0"/><path vector-effect="non-scaling-stroke" transform="translate(56.61,0) scale(1.0,1)" d="M4.8 -6.5V1.1A2.4 2.4 0 0 1 2.4 3.5H1M4.8 -4.1A2.4 2.4 0 0 0 0 -4.1V-2.4A2.4 2.4 0 0 0 4.8 -2.4"/><path vector-effect="non-scaling-stroke" transform="translate(65.38,0) scale(1.0,1)" d="M0 0V-10M5.5 0V-10M0 -5.2H5.5"/><path vector-effect="non-scaling-stroke" transform="translate(74.85,0) scale(1.0,1)" d="M0 -4.1A2.4 2.4 0 0 1 4.8 -4.1V-2.4A2.4 2.4 0 0 1 0 -2.4Z"/><path vector-effect="non-scaling-stroke" transform="translate(83.63,0) scale(1.0,1)" d="M0 -10V-1A1 1 0 0 0 1 0"/><path vector-effect="non-scaling-stroke" transform="translate(88.60,0) scale(1.0,1)" d="M0.1 -3.3H4.8V-4.1A2.4 2.4 0 0 0 0 -4.1V-2.4A2.4 2.4 0 0 0 2.4 0H4.4"/></g>
<g transform="translate(672.20,700.20) scale(1.0300)" fill="none" stroke="#c97a6a" stroke-width="0.95" stroke-linecap="round" stroke-linejoin="round" opacity="1.0"><path vector-effect="non-scaling-stroke" transform="translate(0.00,0) scale(1.0,1)" d="M0 0V-10L2.8 -4L5.6 -10V0"/><path vector-effect="non-scaling-stroke" transform="translate(9.57,0) scale(1.0,1)" d="M0 -4.1A2.4 2.4 0 0 1 4.8 -4.1V-2.4A2.4 2.4 0 0 1 0 -2.4Z"/><path vector-effect="non-scaling-stroke" transform="translate(18.35,0) scale(1.0,1)" d="M0 -6.5V-2.4A2.4 2.4 0 0 0 4.8 -2.4M4.8 -6.5V0"/><path vector-effect="non-scaling-stroke" transform="translate(27.12,0) scale(1.0,1)" d="M0 -6.5V0M0 -4.1A2.4 2.4 0 0 1 4.8 -4.1V0"/><path vector-effect="non-scaling-stroke" transform="translate(35.89,0) scale(1.0,1)" d="M1.4 -10V-1.6A1.6 1.6 0 0 0 3 0H4M0 -6.5H4"/><path vector-effect="non-scaling-stroke" transform="translate(43.86,0) scale(1.0,1)" d="M0 -6.5V0M0 -9.6V-9.5"/><path vector-effect="non-scaling-stroke" transform="translate(47.84,0) scale(1.0,1)" d="M0 -6.5V0M0 -4.1A2.4 2.4 0 0 1 4.8 -4.1V0"/><path vector-effect="non-scaling-stroke" transform="translate(56.61,0) scale(1.0,1)" d="M4.8 -6.5V1.1A2.4 2.4 0 0 1 2.4 3.5H1M4.8 -4.1A2.4 2.4 0 0 0 0 -4.1V-2.4A2.4 2.4 0 0 0 4.8 -2.4"/><path vector-effect="non-scaling-stroke" transform="translate(65.38,0) scale(1.0,1)" d="M0 0V-10M5.5 0V-10M0 -5.2H5.5"/><path vector-effect="non-scaling-stroke" transform="translate(74.85,0) scale(1.0,1)" d="M0 -4.1A2.4 2.4 0 0 1 4.8 -4.1V-2.4A2.4 2.4 0 0 1 0 -2.4Z"/><path vector-effect="non-scaling-stroke" transform="translate(83.63,0) scale(1.0,1)" d="M0 -10V-1A1 1 0 0 0 1 0"/><path vector-effect="non-scaling-stroke" transform="translate(88.60,0) scale(1.0,1)" d="M0.1 -3.3H4.8V-4.1A2.4 2.4 0 0 0 0 -4.1V-2.4A2.4 2.4 0 0 0 2.4 0H4.4"/></g>
<rect x="420.2" y="341.1" width="94.4" height="74.4" fill="none" stroke="#e0308a" stroke-width="1.1"/>
<path d="M445.4 346.8H489.4 M445.4 410.3H489.4 M432.4 365.3V391.3 M502.4 365.3V391.3" stroke="#e2906c" stroke-width="1.1"/>
<path d="M445.4 348.8H489.4 M445.4 407.8H489.4 M437.4 356.3V400.3 M497.4 356.3V400.3" stroke="#e0d8cc" stroke-width="0.9"/>
<circle cx="467.4" cy="378.3" r="20.3" fill="none" stroke="#e2906c" stroke-width="1"/>
<g transform="translate(453.50,383.90) scale(1.0300)" fill="none" stroke="#c97a6a" stroke-width="0.95" stroke-linecap="round" stroke-linejoin="round" opacity="1.0"><path vector-effect="non-scaling-stroke" transform="translate(0.00,0) scale(1.4,1)" d="M5.2 -9.2Q4.5 -10 2.7 -10A2.5 2.5 0 0 0 2.7 -5A2.5 2.5 0 0 1 2.7 0Q1 0 0 -0.8"/><path vector-effect="non-scaling-stroke" transform="translate(9.35,0) scale(1.4,1)" d="M0 -10L1.55 0L3.1 -6.5L4.65 0L6.2 -10"/><path vector-effect="non-scaling-stroke" transform="translate(20.10,0) scale(1.4,1)" d="M0.2 -8.4A2.6 2.6 0 0 1 5 -7.4Q5 -6.2 4 -5.1L0 0H5.2"/></g>
<g transform="translate(440.50,428.30) scale(1.0300)" fill="none" stroke="#c97a6a" stroke-width="0.95" stroke-linecap="round" stroke-linejoin="round" opacity="1.0"><path vector-effect="non-scaling-stroke" transform="translate(0.00,0) scale(1.05,1)" d="M5.2 -9.2Q4.5 -10 2.7 -10A2.5 2.5 0 0 0 2.7 -5A2.5 2.5 0 0 1 2.7 0Q1 0 0 -0.8"/><path vector-effect="non-scaling-stroke" transform="translate(9.24,0) scale(1.05,1)" d="M0 -10L1.55 0L3.1 -6.5L4.65 0L6.2 -10"/><path vector-effect="non-scaling-stroke" transform="translate(19.52,0) scale(1.05,1)" d="M0 1.2H5.5"/><path vector-effect="non-scaling-stroke" transform="translate(29.07,0) scale(1.05,1)" d="M0 0V-10H2.8A2.7 2.7 0 0 1 2.8 -4.6H0"/><path vector-effect="non-scaling-stroke" transform="translate(38.62,0) scale(1.05,1)" d="M0 -6.5V-2.4A2.4 2.4 0 0 0 4.8 -2.4M4.8 -6.5V0"/><path vector-effect="non-scaling-stroke" transform="translate(47.44,0) scale(1.05,1)" d="M4.4 -6.5H1.6A1.6 1.6 0 0 0 1.6 -3.3H2.8A1.6 1.6 0 0 1 2.8 0H0"/><path vector-effect="non-scaling-stroke" transform="translate(55.83,0) scale(1.05,1)" d="M0 -10V0M0 -4.1A2.4 2.4 0 0 1 4.8 -4.1V0"/></g>
<rect x="420.2" y="518.5" width="94.4" height="74.4" fill="none" stroke="#e0308a" stroke-width="1.1"/>
<path d="M445.4 524.2H489.4 M445.4 587.7H489.4 M432.4 542.7V568.7 M502.4 542.7V568.7" stroke="#e2906c" stroke-width="1.1"/>
<path d="M445.4 526.2H489.4 M445.4 585.2H489.4 M437.4 533.7V577.7 M497.4 533.7V577.7" stroke="#e0d8cc" stroke-width="0.9"/>
<circle cx="467.4" cy="555.7" r="20.3" fill="none" stroke="#e2906c" stroke-width="1"/>
<g transform="translate(453.50,561.30) scale(1.0300)" fill="none" stroke="#c97a6a" stroke-width="0.95" stroke-linecap="round" stroke-linejoin="round" opacity="1.0"><path vector-effect="non-scaling-stroke" transform="translate(0.00,0) scale(1.4,1)" d="M5.2 -9.2Q4.5 -10 2.7 -10A2.5 2.5 0 0 0 2.7 -5A2.5 2.5 0 0 1 2.7 0Q1 0 0 -0.8"/><path vector-effect="non-scaling-stroke" transform="translate(11.31,0) scale(1.4,1)" d="M0 -10L1.55 0L3.1 -6.5L4.65 0L6.2 -10"/><path vector-effect="non-scaling-stroke" transform="translate(24.02,0) scale(1.4,1)" d="M0 -8L2.4 -10V0"/></g>
<g transform="translate(440.50,605.70) scale(1.0300)" fill="none" stroke="#c97a6a" stroke-width="0.95" stroke-linecap="round" stroke-linejoin="round" opacity="1.0"><path vector-effect="non-scaling-stroke" transform="translate(0.00,0) scale(1.05,1)" d="M5.2 -9.2Q4.5 -10 2.7 -10A2.5 2.5 0 0 0 2.7 -5A2.5 2.5 0 0 1 2.7 0Q1 0 0 -0.8"/><path vector-effect="non-scaling-stroke" transform="translate(9.24,0) scale(1.05,1)" d="M0 -10L1.55 0L3.1 -6.5L4.65 0L6.2 -10"/><path vector-effect="non-scaling-stroke" transform="translate(19.52,0) scale(1.05,1)" d="M0 1.2H5.5"/><path vector-effect="non-scaling-stroke" transform="translate(29.07,0) scale(1.05,1)" d="M0 0V-10H2.8A2.7 2.7 0 0 1 2.8 -4.6H0"/><path vector-effect="non-scaling-stroke" transform="translate(38.62,0) scale(1.05,1)" d="M0 -6.5V-2.4A2.4 2.4 0 0 0 4.8 -2.4M4.8 -6.5V0"/><path vector-effect="non-scaling-stroke" transform="translate(47.44,0) scale(1.05,1)" d="M4.4 -6.5H1.6A1.6 1.6 0 0 0 1.6 -3.3H2.8A1.6 1.6 0 0 1 2.8 0H0"/><path vector-effect="non-scaling-stroke" transform="translate(55.83,0) scale(1.05,1)" d="M0 -10V0M0 -4.1A2.4 2.4 0 0 1 4.8 -4.1V0"/></g>
<circle cx="434.6" cy="355.5" r="14.3" fill="#020a16"/>
<circle cx="434.6" cy="355.5" r="11.9" fill="none" stroke="#d33a2c" stroke-width="1.1" stroke-dasharray="2.6 1.1"/>
<circle cx="434.6" cy="355.5" r="10.2" fill="#d63b2b"/>
<circle cx="434.6" cy="355.5" r="7.3" fill="#f2cf1c"/>
<circle cx="434.6" cy="355.5" r="5.0" fill="#030b16"/>
<circle cx="499.4" cy="355.5" r="14.3" fill="#020a16"/>
<circle cx="499.4" cy="355.5" r="11.9" fill="none" stroke="#d33a2c" stroke-width="1.1" stroke-dasharray="2.6 1.1"/>
<circle cx="499.4" cy="355.5" r="10.2" fill="#d63b2b"/>
<circle cx="499.4" cy="355.5" r="7.3" fill="#f2cf1c"/>
<circle cx="499.4" cy="355.5" r="5.0" fill="#030b16"/>
<circle cx="434.6" cy="400.6" r="14.3" fill="#020a16"/>
<circle cx="434.6" cy="400.6" r="11.9" fill="none" stroke="#d33a2c" stroke-width="1.1" stroke-dasharray="2.6 1.1"/>
<circle cx="434.6" cy="400.6" r="10.2" fill="#d63b2b"/>
<circle cx="434.6" cy="400.6" r="7.3" fill="#f2cf1c"/>
<circle cx="434.6" cy="400.6" r="5.0" fill="#030b16"/>
<circle cx="499.4" cy="400.6" r="14.3" fill="#020a16"/>
<circle cx="499.4" cy="400.6" r="11.9" fill="none" stroke="#d33a2c" stroke-width="1.1" stroke-dasharray="2.6 1.1"/>
<circle cx="499.4" cy="400.6" r="10.2" fill="#d63b2b"/>
<circle cx="499.4" cy="400.6" r="7.3" fill="#f2cf1c"/>
<circle cx="499.4" cy="400.6" r="5.0" fill="#030b16"/>
<circle cx="434.6" cy="533" r="14.3" fill="#020a16"/>
<circle cx="434.6" cy="533" r="11.9" fill="none" stroke="#d33a2c" stroke-width="1.1" stroke-dasharray="2.6 1.1"/>
<circle cx="434.6" cy="533" r="10.2" fill="#d63b2b"/>
<circle cx="434.6" cy="533" r="7.3" fill="#f2cf1c"/>
<circle cx="434.6" cy="533" r="5.0" fill="#030b16"/>
<circle cx="499.4" cy="533" r="14.3" fill="#020a16"/>
<circle cx="499.4" cy="533" r="11.9" fill="none" stroke="#d33a2c" stroke-width="1.1" stroke-dasharray="2.6 1.1"/>
<circle cx="499.4" cy="533" r="10.2" fill="#d63b2b"/>
<circle cx="499.4" cy="533" r="7.3" fill="#f2cf1c"/>
<circle cx="499.4" cy="533" r="5.0" fill="#030b16"/>
<circle cx="434.6" cy="578" r="14.3" fill="#020a16"/>
<circle cx="434.6" cy="578" r="11.9" fill="none" stroke="#d33a2c" stroke-width="1.1" stroke-dasharray="2.6 1.1"/>
<circle cx="434.6" cy="578" r="10.2" fill="#d63b2b"/>
<circle cx="434.6" cy="578" r="7.3" fill="#f2cf1c"/>
<circle cx="434.6" cy="578" r="5.0" fill="#030b16"/>
<circle cx="499.4" cy="578" r="14.3" fill="#020a16"/>
<circle cx="499.4" cy="578" r="11.9" fill="none" stroke="#d33a2c" stroke-width="1.1" stroke-dasharray="2.6 1.1"/>
<circle cx="499.4" cy="578" r="10.2" fill="#d63b2b"/>
<circle cx="499.4" cy="578" r="7.3" fill="#f2cf1c"/>
<circle cx="499.4" cy="578" r="5.0" fill="#030b16"/>
<rect x="599.4" y="324.3" width="64.2" height="64.3" fill="none" stroke="#e0308a" stroke-width="1.1"/>
<circle cx="631.5" cy="356.5" r="27.5" fill="none" stroke="#e2906c" stroke-width="1"/>
<circle cx="631.5" cy="356.5" r="24.5" fill="none" stroke="#c9786c" stroke-width="0.9"/>
<rect x="605.6" y="343.1" width="26.5" height="26.8" rx="3" fill="#020a16"/>
<rect x="628" y="346.5" width="10" height="20" fill="#020a16"/>
<circle cx="644.5" cy="356.5" r="12.4" fill="#020a16"/>
<rect x="607.6" y="345.3" width="22.4" height="22.4" fill="none" stroke="#d33a2c" stroke-width="1.1"/>
<rect x="609.8" y="347.5" width="18" height="18" fill="#d63b2b"/>
<circle cx="618.8" cy="356.5" r="5.9" fill="#f2cf1c"/><circle cx="618.8" cy="356.5" r="4.3" fill="#030b16"/>
<circle cx="644.5" cy="356.5" r="10.5" fill="none" stroke="#d33a2c" stroke-width="1.1" stroke-dasharray="2.4 1"/>
<circle cx="644.5" cy="356.5" r="9" fill="#d63b2b"/>
<circle cx="644.5" cy="356.5" r="5.9" fill="#f2cf1c"/><circle cx="644.5" cy="356.5" r="4.3" fill="#030b16"/>
<g transform="translate(619.80,399.00) scale(1.0300)" fill="none" stroke="#c97a6a" stroke-width="0.95" stroke-linecap="round" stroke-linejoin="round" opacity="1.0"><path vector-effect="non-scaling-stroke" transform="translate(0.00,0) scale(1.05,1)" d="M0 -10V0H5"/><path vector-effect="non-scaling-stroke" transform="translate(8.47,0) scale(1.05,1)" d="M5 -10H0V0H5M0 -5.2H3.6"/><path vector-effect="non-scaling-stroke" transform="translate(16.94,0) scale(1.05,1)" d="M0 0V-10H2A3.5 3.5 0 0 1 5.5 -6.5V-3.5A3.5 3.5 0 0 1 2 0Z"/></g>
<rect x="599.4" y="399.6" width="64.2" height="64.3" fill="none" stroke="#e0308a" stroke-width="1.1"/>
<circle cx="631.5" cy="431.8" r="27.5" fill="none" stroke="#e2906c" stroke-width="1"/>
<circle cx="631.5" cy="431.8" r="24.5" fill="none" stroke="#c9786c" stroke-width="0.9"/>
<rect x="605.6" y="418.40000000000003" width="26.5" height="26.8" rx="3" fill="#020a16"/>
<rect x="628" y="421.8" width="10" height="20" fill="#020a16"/>
<circle cx="644.5" cy="431.8" r="12.4" fill="#020a16"/>
<rect x="607.6" y="420.6" width="22.4" height="22.4" fill="none" stroke="#d33a2c" stroke-width="1.1"/>
<rect x="609.8" y="422.8" width="18" height="18" fill="#d63b2b"/>
<circle cx="618.8" cy="431.8" r="5.9" fill="#f2cf1c"/><circle cx="618.8" cy="431.8" r="4.3" fill="#030b16"/>
<circle cx="644.5" cy="431.8" r="10.5" fill="none" stroke="#d33a2c" stroke-width="1.1" stroke-dasharray="2.4 1"/>
<circle cx="644.5" cy="431.8" r="9" fill="#d63b2b"/>
<circle cx="644.5" cy="431.8" r="5.9" fill="#f2cf1c"/><circle cx="644.5" cy="431.8" r="4.3" fill="#030b16"/>
<g transform="translate(623.80,399.00) scale(1.0300)" fill="none" stroke="#e39a6c" stroke-width="0.95" stroke-linecap="round" stroke-linejoin="round" opacity="1.0"><path vector-effect="non-scaling-stroke" transform="translate(0.00,0) scale(1.05,1)" d="M0 0V-10H2A3.5 3.5 0 0 1 5.5 -6.5V-3.5A3.5 3.5 0 0 1 2 0Z"/><path vector-effect="non-scaling-stroke" transform="translate(10.07,0) scale(1.05,1)" d="M0.2 -8.4A2.6 2.6 0 0 1 5 -7.4Q5 -6.2 4 -5.1L0 0H5.2"/></g>
<g transform="translate(619.80,476.50) scale(1.0300)" fill="none" stroke="#c97a6a" stroke-width="0.95" stroke-linecap="round" stroke-linejoin="round" opacity="1.0"><path vector-effect="non-scaling-stroke" transform="translate(0.00,0) scale(1.05,1)" d="M0 -10V0H5"/><path vector-effect="non-scaling-stroke" transform="translate(8.47,0) scale(1.05,1)" d="M5 -10H0V0H5M0 -5.2H3.6"/><path vector-effect="non-scaling-stroke" transform="translate(16.94,0) scale(1.05,1)" d="M0 0V-10H2A3.5 3.5 0 0 1 5.5 -6.5V-3.5A3.5 3.5 0 0 1 2 0Z"/></g>
<rect x="599.4" y="526.9" width="64.2" height="64.3" fill="none" stroke="#e0308a" stroke-width="1.1"/>
<circle cx="631.5" cy="559.1" r="27.5" fill="none" stroke="#e2906c" stroke-width="1"/>
<circle cx="631.5" cy="559.1" r="24.5" fill="none" stroke="#c9786c" stroke-width="0.9"/>
<rect x="605.6" y="545.7" width="26.5" height="26.8" rx="3" fill="#020a16"/>
<rect x="628" y="549.1" width="10" height="20" fill="#020a16"/>
<circle cx="644.5" cy="559.1" r="12.4" fill="#020a16"/>
<rect x="607.6" y="547.9" width="22.4" height="22.4" fill="none" stroke="#d33a2c" stroke-width="1.1"/>
<rect x="609.8" y="550.1" width="18" height="18" fill="#d63b2b"/>
<circle cx="618.8" cy="559.1" r="5.9" fill="#f2cf1c"/><circle cx="618.8" cy="559.1" r="4.3" fill="#030b16"/>
<circle cx="644.5" cy="559.1" r="10.5" fill="none" stroke="#d33a2c" stroke-width="1.1" stroke-dasharray="2.4 1"/>
<circle cx="644.5" cy="559.1" r="9" fill="#d63b2b"/>
<circle cx="644.5" cy="559.1" r="5.9" fill="#f2cf1c"/><circle cx="644.5" cy="559.1" r="4.3" fill="#030b16"/>
<g transform="translate(623.80,524.40) scale(1.0300)" fill="none" stroke="#e39a6c" stroke-width="0.95" stroke-linecap="round" stroke-linejoin="round" opacity="1.0"><path vector-effect="non-scaling-stroke" transform="translate(0.00,0) scale(1.05,1)" d="M0 0V-10H2A3.5 3.5 0 0 1 5.5 -6.5V-3.5A3.5 3.5 0 0 1 2 0Z"/><path vector-effect="non-scaling-stroke" transform="translate(10.07,0) scale(1.05,1)" d="M0.2 -10H5L2.2 -6H3A3 3 0 0 1 3 0H2Q0.8 0 0 -0.8"/></g>
<g transform="translate(619.80,602.70) scale(1.0300)" fill="none" stroke="#c97a6a" stroke-width="0.95" stroke-linecap="round" stroke-linejoin="round" opacity="1.0"><path vector-effect="non-scaling-stroke" transform="translate(0.00,0) scale(1.05,1)" d="M0 -10V0H5"/><path vector-effect="non-scaling-stroke" transform="translate(8.47,0) scale(1.05,1)" d="M5 -10H0V0H5M0 -5.2H3.6"/><path vector-effect="non-scaling-stroke" transform="translate(16.94,0) scale(1.05,1)" d="M0 0V-10H2A3.5 3.5 0 0 1 5.5 -6.5V-3.5A3.5 3.5 0 0 1 2 0Z"/></g>
<circle cx="543" cy="458" r="8" fill="#020a16"/>
<circle cx="543" cy="458" r="2.4" fill="#f0d8a0"/>
<rect x="269.5" y="403.5" width="91.2" height="83.7" fill="none" stroke="#e0308a" stroke-width="1.1"/>
<path d="M273.5 407.5H357V484.4H273.5Z M285 407.5V419.7H357 M335 407.5V419.7 M285 484.4V471H357 M335 484.4V471 M325.5 419.7V471" fill="none" stroke="#e2906c" stroke-width="1.1"/>
<path d="M325.5 430.6H294a3.2 3.2 0 0 0 0 6.3H325.5 M325.5 454.5H294a3.4 3.4 0 0 0 0 6.8H325.5" fill="none" stroke="#e2906c" stroke-width="1.1"/>
<g transform="translate(267,456.7) rotate(-90)"><g transform="translate(0.00,0.00) scale(1.0300)" fill="none" stroke="#e39a6c" stroke-width="0.95" stroke-linecap="round" stroke-linejoin="round" opacity="1.0"><path vector-effect="non-scaling-stroke" transform="translate(0.00,0) scale(1.05,1)" d="M0 0V-10H2.8A2.5 2.5 0 0 1 2.8 -5H0M2.8 -5H3A2.5 2.5 0 0 1 3 0H0"/><path vector-effect="non-scaling-stroke" transform="translate(9.76,0) scale(1.05,1)" d="M0 -10H5.6M2.8 -10V0"/><path vector-effect="non-scaling-stroke" transform="translate(19.62,0) scale(1.05,1)" d="M0 -8L2.4 -10V0"/></g></g>
<g transform="translate(319.5,456.5) rotate(-90)"><g transform="translate(0.00,0.00) scale(0.9800)" fill="none" stroke="#c97a6a" stroke-width="0.95" stroke-linecap="round" stroke-linejoin="round" opacity="1.0"><path vector-effect="non-scaling-stroke" transform="translate(0.00,0) scale(1.05,1)" d="M0 0V-10H2.8A2.5 2.5 0 0 1 2.8 -5H0M2.8 -5H3A2.5 2.5 0 0 1 3 0H0"/><path vector-effect="non-scaling-stroke" transform="translate(10.58,0) scale(1.05,1)" d="M0 -10H5.6M2.8 -10V0"/><path vector-effect="non-scaling-stroke" transform="translate(21.26,0) scale(1.05,1)" d="M0 -8L2.4 -10V0"/></g></g>
<path d="M341 433 L341 459" stroke="#020a16" stroke-width="29" stroke-linecap="round"/>
<circle cx="341" cy="433.4" r="14.3" fill="#020a16"/>
<circle cx="341" cy="433.4" r="11.9" fill="none" stroke="#d33a2c" stroke-width="1.1" stroke-dasharray="2.6 1.1"/>
<circle cx="341" cy="433.4" r="10.2" fill="#d63b2b"/>
<circle cx="341" cy="433.4" r="7.3" fill="#f2cf1c"/>
<circle cx="341" cy="433.4" r="5.0" fill="#030b16"/>
<rect x="327" y="444.6" width="28" height="28" rx="3.5" fill="#020a16"/>
<rect x="329.2" y="446.8" width="23.6" height="23.6" fill="none" stroke="#d33a2c" stroke-width="1.1" stroke-dasharray="2.6 1.1"/>
<rect x="331" y="448.6" width="20" height="20" fill="#d63b2b"/>
<circle cx="341" cy="458.6" r="7.3" fill="#f2cf1c"/>
<circle cx="341" cy="458.6" r="5.0" fill="#030b16"/>
<g transform="translate(373.3,470) rotate(-90)"><g transform="translate(0.00,0.00) scale(1.0800)" fill="none" stroke="#cfc7b8" stroke-width="0.95" stroke-linecap="round" stroke-linejoin="round" opacity="1.0"><path vector-effect="non-scaling-stroke" transform="translate(0.00,0) scale(1.05,1)" d="M0 0V-10H2.8A2.5 2.5 0 0 1 2.8 -5H0M2.8 -5H3A2.5 2.5 0 0 1 3 0H0"/><path vector-effect="non-scaling-stroke" transform="translate(8.04,0) scale(1.05,1)" d="M0.5 -6.5H2.6A2.2 2.2 0 0 1 4.8 -4.3V0M4.8 -3.5H1.7A1.75 1.75 0 0 0 1.7 0H4.8"/><path vector-effect="non-scaling-stroke" transform="translate(15.35,0) scale(1.05,1)" d="M1.4 -10V-1.6A1.6 1.6 0 0 0 3 0H4M0 -6.5H4"/><path vector-effect="non-scaling-stroke" transform="translate(21.81,0) scale(1.05,1)" d="M1.4 -10V-1.6A1.6 1.6 0 0 0 3 0H4M0 -6.5H4"/><path vector-effect="non-scaling-stroke" transform="translate(28.28,0) scale(1.05,1)" d="M0.1 -3.3H4.8V-4.1A2.4 2.4 0 0 0 0 -4.1V-2.4A2.4 2.4 0 0 0 2.4 0H4.4"/><path vector-effect="non-scaling-stroke" transform="translate(35.59,0) scale(1.05,1)" d="M0 0V-6.5M0 -3.6A3 3 0 0 1 2.6 -6.5"/><path vector-effect="non-scaling-stroke" transform="translate(40.58,0) scale(1.05,1)" d="M0 -6.5L2.5 0M5 -6.5L2.1 2.4Q1.6 3.4 0.7 3.4"/></g></g>
<rect x="391.8" y="656.2" width="246.2" height="40" fill="#2f528a"/>
<clipPath id="pbc"><rect x="391.8" y="656.2" width="246.2" height="40"/></clipPath>
<path d="M37 129h1v1h-1zM37 155h1v1h-1zM37 180h1v1h-1zM37 205h1v1h-1zM37 230h1v1h-1zM37 255h1v3h-1zM37 281h1v1h-1zM37 306h1v1h-1zM37 331h1v1h-1zM37 357h1v1h-1zM37 382h1v1h-1zM37 407h1v1h-1zM37 432h1v1h-1zM37 458h1v1h-1zM37 483h1v1h-1zM37 507h1v3h-1zM37 533h1v1h-1zM37 559h1v1h-1zM37 584h1v1h-1zM37 609h1v1h-1zM37 634h1v1h-1zM37 660h1v1h-1zM37 685h1v1h-1zM37 710h1v1h-1zM37 735h1v1h-1zM37 760h1v3h-1zM37 786h1v1h-1zM63 129h1v1h-1zM63 155h1v1h-1zM63 180h1v1h-1zM63 205h1v1h-1zM63 230h1v1h-1zM63 255h1v3h-1zM63 281h1v1h-1zM63 306h1v1h-1zM63 331h1v1h-1zM63 357h1v1h-1zM63 382h1v1h-1zM63 407h1v1h-1zM63 432h1v1h-1zM63 458h1v1h-1zM63 483h1v1h-1zM63 507h1v3h-1zM63 533h1v1h-1zM63 559h1v1h-1zM63 584h1v1h-1zM63 609h1v1h-1zM63 634h1v1h-1zM63 660h1v1h-1zM63 685h1v1h-1zM63 710h1v1h-1zM63 735h1v1h-1zM63 760h1v3h-1zM63 786h1v1h-1zM87 129h3v1h-3zM87 155h3v1h-3zM87 180h3v1h-3zM87 205h3v1h-3zM87 230h3v1h-3zM87 255h3v3h-3zM87 281h3v1h-3zM87 306h3v1h-3zM87 331h3v1h-3zM87 357h3v1h-3zM87 382h3v1h-3zM87 407h3v1h-3zM87 432h3v1h-3zM87 458h3v1h-3zM87 483h3v1h-3zM87 507h3v3h-3zM87 533h3v1h-3zM87 559h3v1h-3zM87 584h3v1h-3zM87 609h3v1h-3zM87 634h3v1h-3zM87 660h3v1h-3zM87 685h3v1h-3zM87 710h3v1h-3zM87 735h3v1h-3zM87 760h3v3h-3zM87 786h3v1h-3zM113 129h1v1h-1zM113 155h1v1h-1zM113 180h1v1h-1zM113 205h1v1h-1zM113 230h1v1h-1zM113 255h1v3h-1zM113 281h1v1h-1zM113 306h1v1h-1zM113 331h1v1h-1zM113 357h1v1h-1zM113 382h1v1h-1zM113 407h1v1h-1zM113 432h1v1h-1zM113 458h1v1h-1zM113 483h1v1h-1zM113 507h1v3h-1zM113 533h1v1h-1zM113 559h1v1h-1zM113 584h1v1h-1zM113 609h1v1h-1zM113 634h1v1h-1zM113 660h1v1h-1zM113 685h1v1h-1zM113 710h1v1h-1zM113 735h1v1h-1zM113 760h1v3h-1zM113 786h1v1h-1zM139 129h1v1h-1zM139 155h1v1h-1zM139 180h1v1h-1zM139 205h1v1h-1zM139 230h1v1h-1zM139 255h1v3h-1zM139 281h1v1h-1zM139 306h1v1h-1zM139 331h1v1h-1zM139 357h1v1h-1zM139 382h1v1h-1zM139 407h1v1h-1zM139 432h1v1h-1zM139 458h1v1h-1zM139 483h1v1h-1zM139 507h1v3h-1zM139 533h1v1h-1zM139 559h1v1h-1zM139 584h1v1h-1zM139 609h1v1h-1zM139 634h1v1h-1zM139 660h1v1h-1zM139 685h1v1h-1zM139 710h1v1h-1zM139 735h1v1h-1zM139 760h1v3h-1zM139 786h1v1h-1zM164 129h1v1h-1zM164 155h1v1h-1zM164 180h1v1h-1zM164 205h1v1h-1zM164 230h1v1h-1zM164 255h1v3h-1zM164 281h1v1h-1zM164 306h1v1h-1zM164 331h1v1h-1zM164 357h1v1h-1zM164 382h1v1h-1zM164 407h1v1h-1zM164 432h1v1h-1zM164 458h1v1h-1zM164 483h1v1h-1zM164 507h1v3h-1zM164 533h1v1h-1zM164 559h1v1h-1zM164 584h1v1h-1zM164 609h1v1h-1zM164 634h1v1h-1zM164 660h1v1h-1zM164 685h1v1h-1zM164 710h1v1h-1zM164 735h1v1h-1zM164 760h1v3h-1zM164 786h1v1h-1zM189 129h1v1h-1zM189 155h1v1h-1zM189 180h1v1h-1zM189 205h1v1h-1zM189 230h1v1h-1zM189 255h1v3h-1zM189 281h1v1h-1zM189 306h1v1h-1zM189 331h1v1h-1zM189 357h1v1h-1zM189 382h1v1h-1zM189 407h1v1h-1zM189 432h1v1h-1zM189 458h1v1h-1zM189 483h1v1h-1zM189 507h1v3h-1zM189 533h1v1h-1zM189 559h1v1h-1zM189 584h1v1h-1zM189 609h1v1h-1zM189 634h1v1h-1zM189 660h1v1h-1zM189 685h1v1h-1zM189 710h1v1h-1zM189 735h1v1h-1zM189 760h1v3h-1zM189 786h1v1h-1zM214 129h1v1h-1zM214 155h1v1h-1zM214 180h1v1h-1zM214 205h1v1h-1zM214 230h1v1h-1zM214 255h1v3h-1zM214 281h1v1h-1zM214 306h1v1h-1zM214 331h1v1h-1zM214 357h1v1h-1zM214 382h1v1h-1zM214 407h1v1h-1zM214 432h1v1h-1zM214 458h1v1h-1zM214 483h1v1h-1zM214 507h1v3h-1zM214 533h1v1h-1zM214 559h1v1h-1zM214 584h1v1h-1zM214 609h1v1h-1zM214 634h1v1h-1zM214 660h1v1h-1zM214 685h1v1h-1zM214 710h1v1h-1zM214 735h1v1h-1zM214 760h1v3h-1zM214 786h1v1h-1zM240 129h1v1h-1zM240 155h1v1h-1zM240 180h1v1h-1zM240 205h1v1h-1zM240 230h1v1h-1zM240 255h1v3h-1zM240 281h1v1h-1zM240 306h1v1h-1zM240 331h1v1h-1zM240 357h1v1h-1zM240 382h1v1h-1zM240 407h1v1h-1zM240 432h1v1h-1zM240 458h1v1h-1zM240 483h1v1h-1zM240 507h1v3h-1zM240 533h1v1h-1zM240 559h1v1h-1zM240 584h1v1h-1zM240 609h1v1h-1zM240 634h1v1h-1zM240 660h1v1h-1zM240 685h1v1h-1zM240 710h1v1h-1zM240 735h1v1h-1zM240 760h1v3h-1zM240 786h1v1h-1zM265 129h1v1h-1zM265 155h1v1h-1zM265 180h1v1h-1zM265 205h1v1h-1zM265 230h1v1h-1zM265 255h1v3h-1zM265 281h1v1h-1zM265 306h1v1h-1zM265 331h1v1h-1zM265 357h1v1h-1zM265 382h1v1h-1zM265 407h1v1h-1zM265 432h1v1h-1zM265 458h1v1h-1zM265 483h1v1h-1zM265 507h1v3h-1zM265 533h1v1h-1zM265 559h1v1h-1zM265 584h1v1h-1zM265 609h1v1h-1zM265 634h1v1h-1zM265 660h1v1h-1zM265 685h1v1h-1zM265 710h1v1h-1zM265 735h1v1h-1zM265 760h1v3h-1zM265 786h1v1h-1zM290 129h1v1h-1zM290 155h1v1h-1zM290 180h1v1h-1zM290 205h1v1h-1zM290 230h1v1h-1zM290 255h1v3h-1zM290 281h1v1h-1zM290 306h1v1h-1zM290 331h1v1h-1zM290 357h1v1h-1zM290 382h1v1h-1zM290 407h1v1h-1zM290 432h1v1h-1zM290 458h1v1h-1zM290 483h1v1h-1zM290 507h1v3h-1zM290 533h1v1h-1zM290 559h1v1h-1zM290 584h1v1h-1zM290 609h1v1h-1zM290 634h1v1h-1zM290 660h1v1h-1zM290 685h1v1h-1zM290 710h1v1h-1zM290 735h1v1h-1zM290 760h1v3h-1zM290 786h1v1h-1zM315 129h1v1h-1zM315 155h1v1h-1zM315 180h1v1h-1zM315 205h1v1h-1zM315 230h1v1h-1zM315 255h1v3h-1zM315 281h1v1h-1zM315 306h1v1h-1zM315 331h1v1h-1zM315 357h1v1h-1zM315 382h1v1h-1zM315 407h1v1h-1zM315 432h1v1h-1zM315 458h1v1h-1zM315 483h1v1h-1zM315 507h1v3h-1zM315 533h1v1h-1zM315 559h1v1h-1zM315 584h1v1h-1zM315 609h1v1h-1zM315 634h1v1h-1zM315 660h1v1h-1zM315 685h1v1h-1zM315 710h1v1h-1zM315 735h1v1h-1zM315 760h1v3h-1zM315 786h1v1h-1zM340 129h3v1h-3zM340 155h3v1h-3zM340 180h3v1h-3zM340 205h3v1h-3zM340 230h3v1h-3zM340 255h3v3h-3zM340 281h3v1h-3zM340 306h3v1h-3zM340 331h3v1h-3zM340 357h3v1h-3zM340 382h3v1h-3zM340 407h3v1h-3zM340 432h3v1h-3zM340 458h3v1h-3zM340 483h3v1h-3zM340 507h3v3h-3zM340 533h3v1h-3zM340 559h3v1h-3zM340 584h3v1h-3zM340 609h3v1h-3zM340 634h3v1h-3zM340 660h3v1h-3zM340 685h3v1h-3zM340 710h3v1h-3zM340 735h3v1h-3zM340 760h3v3h-3zM340 786h3v1h-3zM366 129h1v1h-1zM366 155h1v1h-1zM366 180h1v1h-1zM366 205h1v1h-1zM366 230h1v1h-1zM366 255h1v3h-1zM366 281h1v1h-1zM366 306h1v1h-1zM366 331h1v1h-1zM366 357h1v1h-1zM366 382h1v1h-1zM366 407h1v1h-1zM366 432h1v1h-1zM366 458h1v1h-1zM366 483h1v1h-1zM366 507h1v3h-1zM366 533h1v1h-1zM366 559h1v1h-1zM366 584h1v1h-1zM366 609h1v1h-1zM366 634h1v1h-1zM366 660h1v1h-1zM366 685h1v1h-1zM366 710h1v1h-1zM366 735h1v1h-1zM366 760h1v3h-1zM366 786h1v1h-1zM391 129h1v1h-1zM391 155h1v1h-1zM391 180h1v1h-1zM391 205h1v1h-1zM391 230h1v1h-1zM391 255h1v3h-1zM391 281h1v1h-1zM391 306h1v1h-1zM391 331h1v1h-1zM391 357h1v1h-1zM391 382h1v1h-1zM391 407h1v1h-1zM391 432h1v1h-1zM391 458h1v1h-1zM391 483h1v1h-1zM391 507h1v3h-1zM391 533h1v1h-1zM391 559h1v1h-1zM391 584h1v1h-1zM391 609h1v1h-1zM391 634h1v1h-1zM391 660h1v1h-1zM391 685h1v1h-1zM391 710h1v1h-1zM391 735h1v1h-1zM391 760h1v3h-1zM391 786h1v1h-1zM416 129h1v1h-1zM416 155h1v1h-1zM416 180h1v1h-1zM416 205h1v1h-1zM416 230h1v1h-1zM416 255h1v3h-1zM416 281h1v1h-1zM416 306h1v1h-1zM416 331h1v1h-1zM416 357h1v1h-1zM416 382h1v1h-1zM416 407h1v1h-1zM416 432h1v1h-1zM416 458h1v1h-1zM416 483h1v1h-1zM416 507h1v3h-1zM416 533h1v1h-1zM416 559h1v1h-1zM416 584h1v1h-1zM416 609h1v1h-1zM416 634h1v1h-1zM416 660h1v1h-1zM416 685h1v1h-1zM416 710h1v1h-1zM416 735h1v1h-1zM416 760h1v3h-1zM416 786h1v1h-1zM442 129h1v1h-1zM442 155h1v1h-1zM442 180h1v1h-1zM442 205h1v1h-1zM442 230h1v1h-1zM442 255h1v3h-1zM442 281h1v1h-1zM442 306h1v1h-1zM442 331h1v1h-1zM442 357h1v1h-1zM442 382h1v1h-1zM442 407h1v1h-1zM442 432h1v1h-1zM442 458h1v1h-1zM442 483h1v1h-1zM442 507h1v3h-1zM442 533h1v1h-1zM442 559h1v1h-1zM442 584h1v1h-1zM442 609h1v1h-1zM442 634h1v1h-1zM442 660h1v1h-1zM442 685h1v1h-1zM442 710h1v1h-1zM442 735h1v1h-1zM442 760h1v3h-1zM442 786h1v1h-1zM467 129h1v1h-1zM467 155h1v1h-1zM467 180h1v1h-1zM467 205h1v1h-1zM467 230h1v1h-1zM467 255h1v3h-1zM467 281h1v1h-1zM467 306h1v1h-1zM467 331h1v1h-1zM467 357h1v1h-1zM467 382h1v1h-1zM467 407h1v1h-1zM467 432h1v1h-1zM467 458h1v1h-1zM467 483h1v1h-1zM467 507h1v3h-1zM467 533h1v1h-1zM467 559h1v1h-1zM467 584h1v1h-1zM467 609h1v1h-1zM467 634h1v1h-1zM467 660h1v1h-1zM467 685h1v1h-1zM467 710h1v1h-1zM467 735h1v1h-1zM467 760h1v3h-1zM467 786h1v1h-1zM492 129h1v1h-1zM492 155h1v1h-1zM492 180h1v1h-1zM492 205h1v1h-1zM492 230h1v1h-1zM492 255h1v3h-1zM492 281h1v1h-1zM492 306h1v1h-1zM492 331h1v1h-1zM492 357h1v1h-1zM492 382h1v1h-1zM492 407h1v1h-1zM492 432h1v1h-1zM492 458h1v1h-1zM492 483h1v1h-1zM492 507h1v3h-1zM492 533h1v1h-1zM492 559h1v1h-1zM492 584h1v1h-1zM492 609h1v1h-1zM492 634h1v1h-1zM492 660h1v1h-1zM492 685h1v1h-1zM492 710h1v1h-1zM492 735h1v1h-1zM492 760h1v3h-1zM492 786h1v1h-1zM517 129h1v1h-1zM517 155h1v1h-1zM517 180h1v1h-1zM517 205h1v1h-1zM517 230h1v1h-1zM517 255h1v3h-1zM517 281h1v1h-1zM517 306h1v1h-1zM517 331h1v1h-1zM517 357h1v1h-1zM517 382h1v1h-1zM517 407h1v1h-1zM517 432h1v1h-1zM517 458h1v1h-1zM517 483h1v1h-1zM517 507h1v3h-1zM517 533h1v1h-1zM517 559h1v1h-1zM517 584h1v1h-1zM517 609h1v1h-1zM517 634h1v1h-1zM517 660h1v1h-1zM517 685h1v1h-1zM517 710h1v1h-1zM517 735h1v1h-1zM517 760h1v3h-1zM517 786h1v1h-1zM543 129h1v1h-1zM543 155h1v1h-1zM543 180h1v1h-1zM543 205h1v1h-1zM543 230h1v1h-1zM543 255h1v3h-1zM543 281h1v1h-1zM543 306h1v1h-1zM543 331h1v1h-1zM543 357h1v1h-1zM543 382h1v1h-1zM543 407h1v1h-1zM543 432h1v1h-1zM543 458h1v1h-1zM543 483h1v1h-1zM543 507h1v3h-1zM543 533h1v1h-1zM543 559h1v1h-1zM543 584h1v1h-1zM543 609h1v1h-1zM543 634h1v1h-1zM543 660h1v1h-1zM543 685h1v1h-1zM543 710h1v1h-1zM543 735h1v1h-1zM543 760h1v3h-1zM543 786h1v1h-1zM568 129h1v1h-1zM568 155h1v1h-1zM568 180h1v1h-1zM568 205h1v1h-1zM568 230h1v1h-1zM568 255h1v3h-1zM568 281h1v1h-1zM568 306h1v1h-1zM568 331h1v1h-1zM568 357h1v1h-1zM568 382h1v1h-1zM568 407h1v1h-1zM568 432h1v1h-1zM568 458h1v1h-1zM568 483h1v1h-1zM568 507h1v3h-1zM568 533h1v1h-1zM568 559h1v1h-1zM568 584h1v1h-1zM568 609h1v1h-1zM568 634h1v1h-1zM568 660h1v1h-1zM568 685h1v1h-1zM568 710h1v1h-1zM568 735h1v1h-1zM568 760h1v3h-1zM568 786h1v1h-1zM592 129h3v1h-3zM592 155h3v1h-3zM592 180h3v1h-3zM592 205h3v1h-3zM592 230h3v1h-3zM592 255h3v3h-3zM592 281h3v1h-3zM592 306h3v1h-3zM592 331h3v1h-3zM592 357h3v1h-3zM592 382h3v1h-3zM592 407h3v1h-3zM592 432h3v1h-3zM592 458h3v1h-3zM592 483h3v1h-3zM592 507h3v3h-3zM592 533h3v1h-3zM592 559h3v1h-3zM592 584h3v1h-3zM592 609h3v1h-3zM592 634h3v1h-3zM592 660h3v1h-3zM592 685h3v1h-3zM592 710h3v1h-3zM592 735h3v1h-3zM592 760h3v3h-3zM592 786h3v1h-3zM618 129h1v1h-1zM618 155h1v1h-1zM618 180h1v1h-1zM618 205h1v1h-1zM618 230h1v1h-1zM618 255h1v3h-1zM618 281h1v1h-1zM618 306h1v1h-1zM618 331h1v1h-1zM618 357h1v1h-1zM618 382h1v1h-1zM618 407h1v1h-1zM618 432h1v1h-1zM618 458h1v1h-1zM618 483h1v1h-1zM618 507h1v3h-1zM618 533h1v1h-1zM618 559h1v1h-1zM618 584h1v1h-1zM618 609h1v1h-1zM618 634h1v1h-1zM618 660h1v1h-1zM618 685h1v1h-1zM618 710h1v1h-1zM618 735h1v1h-1zM618 760h1v3h-1zM618 786h1v1h-1zM644 129h1v1h-1zM644 155h1v1h-1zM644 180h1v1h-1zM644 205h1v1h-1zM644 230h1v1h-1zM644 255h1v3h-1zM644 281h1v1h-1zM644 306h1v1h-1zM644 331h1v1h-1zM644 357h1v1h-1zM644 382h1v1h-1zM644 407h1v1h-1zM644 432h1v1h-1zM644 458h1v1h-1zM644 483h1v1h-1zM644 507h1v3h-1zM644 533h1v1h-1zM644 559h1v1h-1zM644 584h1v1h-1zM644 609h1v1h-1zM644 634h1v1h-1zM644 660h1v1h-1zM644 685h1v1h-1zM644 710h1v1h-1zM644 735h1v1h-1zM644 760h1v3h-1zM644 786h1v1h-1zM669 129h1v1h-1zM669 155h1v1h-1zM669 180h1v1h-1zM669 205h1v1h-1zM669 230h1v1h-1zM669 255h1v3h-1zM669 281h1v1h-1zM669 306h1v1h-1zM669 331h1v1h-1zM669 357h1v1h-1zM669 382h1v1h-1zM669 407h1v1h-1zM669 432h1v1h-1zM669 458h1v1h-1zM669 483h1v1h-1zM669 507h1v3h-1zM669 533h1v1h-1zM669 559h1v1h-1zM669 584h1v1h-1zM669 609h1v1h-1zM669 634h1v1h-1zM669 660h1v1h-1zM669 685h1v1h-1zM669 710h1v1h-1zM669 735h1v1h-1zM669 760h1v3h-1zM669 786h1v1h-1zM694 129h1v1h-1zM694 155h1v1h-1zM694 180h1v1h-1zM694 205h1v1h-1zM694 230h1v1h-1zM694 255h1v3h-1zM694 281h1v1h-1zM694 306h1v1h-1zM694 331h1v1h-1zM694 357h1v1h-1zM694 382h1v1h-1zM694 407h1v1h-1zM694 432h1v1h-1zM694 458h1v1h-1zM694 483h1v1h-1zM694 507h1v3h-1zM694 533h1v1h-1zM694 559h1v1h-1zM694 584h1v1h-1zM694 609h1v1h-1zM694 634h1v1h-1zM694 660h1v1h-1zM694 685h1v1h-1zM694 710h1v1h-1zM694 735h1v1h-1zM694 760h1v3h-1zM694 786h1v1h-1zM720 129h1v1h-1zM720 155h1v1h-1zM720 180h1v1h-1zM720 205h1v1h-1zM720 230h1v1h-1zM720 255h1v3h-1zM720 281h1v1h-1zM720 306h1v1h-1zM720 331h1v1h-1zM720 357h1v1h-1zM720 382h1v1h-1zM720 407h1v1h-1zM720 432h1v1h-1zM720 458h1v1h-1zM720 483h1v1h-1zM720 507h1v3h-1zM720 533h1v1h-1zM720 559h1v1h-1zM720 584h1v1h-1zM720 609h1v1h-1zM720 634h1v1h-1zM720 660h1v1h-1zM720 685h1v1h-1zM720 710h1v1h-1zM720 735h1v1h-1zM720 760h1v3h-1zM720 786h1v1h-1zM745 129h1v1h-1zM745 155h1v1h-1zM745 180h1v1h-1zM745 205h1v1h-1zM745 230h1v1h-1zM745 255h1v3h-1zM745 281h1v1h-1zM745 306h1v1h-1zM745 331h1v1h-1zM745 357h1v1h-1zM745 382h1v1h-1zM745 407h1v1h-1zM745 432h1v1h-1zM745 458h1v1h-1zM745 483h1v1h-1zM745 507h1v3h-1zM745 533h1v1h-1zM745 559h1v1h-1zM745 584h1v1h-1zM745 609h1v1h-1zM745 634h1v1h-1zM745 660h1v1h-1zM745 685h1v1h-1zM745 710h1v1h-1zM745 735h1v1h-1zM745 760h1v3h-1zM745 786h1v1h-1zM770 129h1v1h-1zM770 155h1v1h-1zM770 180h1v1h-1zM770 205h1v1h-1zM770 230h1v1h-1zM770 255h1v3h-1zM770 281h1v1h-1zM770 306h1v1h-1zM770 331h1v1h-1zM770 357h1v1h-1zM770 382h1v1h-1zM770 407h1v1h-1zM770 432h1v1h-1zM770 458h1v1h-1zM770 483h1v1h-1zM770 507h1v3h-1zM770 533h1v1h-1zM770 559h1v1h-1zM770 584h1v1h-1zM770 609h1v1h-1zM770 634h1v1h-1zM770 660h1v1h-1zM770 685h1v1h-1zM770 710h1v1h-1zM770 735h1v1h-1zM770 760h1v3h-1zM770 786h1v1h-1zM795 129h1v1h-1zM795 155h1v1h-1zM795 180h1v1h-1zM795 205h1v1h-1zM795 230h1v1h-1zM795 255h1v3h-1zM795 281h1v1h-1zM795 306h1v1h-1zM795 331h1v1h-1zM795 357h1v1h-1zM795 382h1v1h-1zM795 407h1v1h-1zM795 432h1v1h-1zM795 458h1v1h-1zM795 483h1v1h-1zM795 507h1v3h-1zM795 533h1v1h-1zM795 559h1v1h-1zM795 584h1v1h-1zM795 609h1v1h-1zM795 634h1v1h-1zM795 660h1v1h-1zM795 685h1v1h-1zM795 710h1v1h-1zM795 735h1v1h-1zM795 760h1v3h-1zM795 786h1v1h-1zM821 129h1v1h-1zM821 155h1v1h-1zM821 180h1v1h-1zM821 205h1v1h-1zM821 230h1v1h-1zM821 255h1v3h-1zM821 281h1v1h-1zM821 306h1v1h-1zM821 331h1v1h-1zM821 357h1v1h-1zM821 382h1v1h-1zM821 407h1v1h-1zM821 432h1v1h-1zM821 458h1v1h-1zM821 483h1v1h-1zM821 507h1v3h-1zM821 533h1v1h-1zM821 559h1v1h-1zM821 584h1v1h-1zM821 609h1v1h-1zM821 634h1v1h-1zM821 660h1v1h-1zM821 685h1v1h-1zM821 710h1v1h-1zM821 735h1v1h-1zM821 760h1v3h-1zM821 786h1v1h-1zM845 129h3v1h-3zM845 155h3v1h-3zM845 180h3v1h-3zM845 205h3v1h-3zM845 230h3v1h-3zM845 255h3v3h-3zM845 281h3v1h-3zM845 306h3v1h-3zM845 331h3v1h-3zM845 357h3v1h-3zM845 382h3v1h-3zM845 407h3v1h-3zM845 432h3v1h-3zM845 458h3v1h-3zM845 483h3v1h-3zM845 507h3v3h-3zM845 533h3v1h-3zM845 559h3v1h-3zM845 584h3v1h-3zM845 609h3v1h-3zM845 634h3v1h-3zM845 660h3v1h-3zM845 685h3v1h-3zM845 710h3v1h-3zM845 735h3v1h-3zM845 760h3v3h-3zM845 786h3v1h-3zM871 129h1v1h-1zM871 155h1v1h-1zM871 180h1v1h-1zM871 205h1v1h-1zM871 230h1v1h-1zM871 255h1v3h-1zM871 281h1v1h-1zM871 306h1v1h-1zM871 331h1v1h-1zM871 357h1v1h-1zM871 382h1v1h-1zM871 407h1v1h-1zM871 432h1v1h-1zM871 458h1v1h-1zM871 483h1v1h-1zM871 507h1v3h-1zM871 533h1v1h-1zM871 559h1v1h-1zM871 584h1v1h-1zM871 609h1v1h-1zM871 634h1v1h-1zM871 660h1v1h-1zM871 685h1v1h-1zM871 710h1v1h-1zM871 735h1v1h-1zM871 760h1v3h-1zM871 786h1v1h-1zM896 129h1v1h-1zM896 155h1v1h-1zM896 180h1v1h-1zM896 205h1v1h-1zM896 230h1v1h-1zM896 255h1v3h-1zM896 281h1v1h-1zM896 306h1v1h-1zM896 331h1v1h-1zM896 357h1v1h-1zM896 382h1v1h-1zM896 407h1v1h-1zM896 432h1v1h-1zM896 458h1v1h-1zM896 483h1v1h-1zM896 507h1v3h-1zM896 533h1v1h-1zM896 559h1v1h-1zM896 584h1v1h-1zM896 609h1v1h-1zM896 634h1v1h-1zM896 660h1v1h-1zM896 685h1v1h-1zM896 710h1v1h-1zM896 735h1v1h-1zM896 760h1v3h-1zM896 786h1v1h-1zM922 129h1v1h-1zM922 155h1v1h-1zM922 180h1v1h-1zM922 205h1v1h-1zM922 230h1v1h-1zM922 255h1v3h-1zM922 281h1v1h-1zM922 306h1v1h-1zM922 331h1v1h-1zM922 357h1v1h-1zM922 382h1v1h-1zM922 407h1v1h-1zM922 432h1v1h-1zM922 458h1v1h-1zM922 483h1v1h-1zM922 507h1v3h-1zM922 533h1v1h-1zM922 559h1v1h-1zM922 584h1v1h-1zM922 609h1v1h-1zM922 634h1v1h-1zM922 660h1v1h-1zM922 685h1v1h-1zM922 710h1v1h-1zM922 735h1v1h-1zM922 760h1v3h-1zM922 786h1v1h-1zM947 129h1v1h-1zM947 155h1v1h-1zM947 180h1v1h-1zM947 205h1v1h-1zM947 230h1v1h-1zM947 255h1v3h-1zM947 281h1v1h-1zM947 306h1v1h-1zM947 331h1v1h-1zM947 357h1v1h-1zM947 382h1v1h-1zM947 407h1v1h-1zM947 432h1v1h-1zM947 458h1v1h-1zM947 483h1v1h-1zM947 507h1v3h-1zM947 533h1v1h-1zM947 559h1v1h-1zM947 584h1v1h-1zM947 609h1v1h-1zM947 634h1v1h-1zM947 660h1v1h-1zM947 685h1v1h-1zM947 710h1v1h-1zM947 735h1v1h-1zM947 760h1v3h-1zM947 786h1v1h-1z" fill="#4a6ca0" clip-path="url(#pbc)"/>
<g fill="none" stroke="#e69090" stroke-linecap="round" stroke-linejoin="round"><g transform="translate(397.80,683.00) scale(2.1000)"><path d="M0 0V-10H2.8A2.7 2.7 0 0 1 2.8 -4.6H0" stroke-width="1.571"/></g><g transform="translate(417.70,683.00) scale(2.1000)"><path d="M0 0V-6.5M0 -3.6A3 3 0 0 1 2.6 -6.5" stroke-width="1.571"/></g><g transform="translate(428.70,683.00) scale(2.1000)"><path d="M0 -4.1A2.4 2.4 0 0 1 4.8 -4.1V-2.4A2.4 2.4 0 0 1 0 -2.4Z" stroke-width="1.571"/></g><g transform="translate(445.00,683.00) scale(2.1000)"><path d="M0 -6.5L2.5 0M5 -6.5L2.1 2.4Q1.6 3.4 0.7 3.4" stroke-width="1.571"/></g><g transform="translate(461.70,683.00) scale(2.1000)"><path d="M0.1 -3.3H4.8V-4.1A2.4 2.4 0 0 0 0 -4.1V-2.4A2.4 2.4 0 0 0 2.4 0H4.4" stroke-width="1.571"/></g><g transform="translate(478.70,683.00) scale(2.1000)"><path d="M4.6 -5.6A2.4 2.4 0 0 0 0 -4.1V-2.4A2.4 2.4 0 0 0 4.6 -0.9" stroke-width="1.571"/></g><g transform="translate(494.20,683.00) scale(2.1000)"><path d="M1.4 -10V-1.6A1.6 1.6 0 0 0 3 0H4M0 -6.5H4" stroke-width="1.571"/></g><g transform="translate(508.70,683.00) scale(2.1000)"><path d="M0 -4.1A2.4 2.4 0 0 1 4.8 -4.1V-2.4A2.4 2.4 0 0 1 0 -2.4Z" stroke-width="1.571"/></g><g transform="translate(542.00,683.00) scale(2.1000)"><path d="M0 -10V0H2.4A2.4 2.4 0 0 0 4.8 -2.4V-4.1A2.4 2.4 0 0 0 2.4 -6.5H0" stroke-width="1.571"/></g><g transform="translate(559.00,683.00) scale(2.1000)"><path d="M0.5 -6.5H2.6A2.2 2.2 0 0 1 4.8 -4.3V0M4.8 -3.5H1.7A1.75 1.75 0 0 0 1.7 0H4.8" stroke-width="1.571"/></g><g transform="translate(576.60,683.00) scale(2.1000)"><path d="M4.4 -6.5H1.6A1.6 1.6 0 0 0 1.6 -3.3H2.8A1.6 1.6 0 0 1 2.8 0H0" stroke-width="1.571"/></g><g transform="translate(594.60,683.00) scale(2.1000)"><path d="M0 -6.5V0M0 -9.6V-9.5" stroke-width="1.571"/></g><g transform="translate(602.70,683.00) scale(2.1000)"><path d="M4.6 -5.6A2.4 2.4 0 0 0 0 -4.1V-2.4A2.4 2.4 0 0 0 4.6 -0.9" stroke-width="1.571"/></g><g transform="translate(619.70,683.00) scale(2.1000)"><path d="M0 -4.1A2.4 2.4 0 0 1 4.8 -4.1V-2.4A2.4 2.4 0 0 1 0 -2.4Z" stroke-width="1.571"/></g></g>
</g></svg>
<svg class="a" style="left:0;top:0" width="40" height="844">
<rect x="4.5" y="132.5" width="29" height="29" fill="#c2e0f3" stroke="#3daee9" stroke-width="1"/>
<rect x="4.5" y="164.5" width="29" height="29" fill="#c2e0f3" stroke="#3daee9" stroke-width="1"/>
<rect x="4.5" y="196.5" width="29" height="29" fill="#c2e0f3" stroke="#3daee9" stroke-width="1"/>
<rect x="4.5" y="292.5" width="29" height="29" fill="#c2e0f3" stroke="#3daee9" stroke-width="1"/>
<rect x="4.5" y="406.5" width="29" height="29" fill="#c2e0f3" stroke="#3daee9" stroke-width="1"/>
<rect x="4.5" y="552.5" width="29" height="29" fill="#c2e0f3" stroke="#3daee9" stroke-width="1"/>
<rect x="4.5" y="731.5" width="29" height="29" fill="#c2e0f3" stroke="#3daee9" stroke-width="1"/>
<circle cx="10" cy="138" r="1.5" fill="#4d4d4d"/>
<circle cx="10" cy="144" r="1.5" fill="#4d4d4d"/>
<circle cx="10" cy="150" r="1.5" fill="#4d4d4d"/>
<circle cx="10" cy="156" r="1.5" fill="#4d4d4d"/>
<circle cx="16" cy="138" r="1.5" fill="#4d4d4d"/>
<circle cx="16" cy="144" r="1.5" fill="#4d4d4d"/>
<circle cx="16" cy="150" r="1.5" fill="#4d4d4d"/>
<circle cx="16" cy="156" r="1.5" fill="#4d4d4d"/>
<circle cx="22" cy="138" r="1.5" fill="#4d4d4d"/>
<circle cx="22" cy="144" r="1.5" fill="#4d4d4d"/>
<circle cx="22" cy="150" r="1.5" fill="#4d4d4d"/>
<circle cx="22" cy="156" r="1.5" fill="#4d4d4d"/>
<circle cx="28" cy="138" r="1.5" fill="#4d4d4d"/>
<circle cx="28" cy="144" r="1.5" fill="#4d4d4d"/>
<circle cx="28" cy="150" r="1.5" fill="#4d4d4d"/>
<circle cx="28" cy="156" r="1.5" fill="#4d4d4d"/>
<circle cx="10" cy="170" r="1.5" fill="#4d4d4d"/>
<circle cx="16" cy="170" r="1.5" fill="#4d4d4d"/>
<circle cx="22" cy="170" r="1.5" fill="#4d4d4d"/>
<circle cx="10" cy="176" r="1.5" fill="#4d4d4d"/>
<circle cx="16" cy="176" r="1.5" fill="#4d4d4d"/>
<circle cx="10" cy="182" r="1.5" fill="#4d4d4d"/>
<path d="M7 190L31 167" stroke="#4d4d4d" stroke-width="1.3"/>
<rect x="28.2" y="172.2" width="1.6" height="1.6" fill="#777"/>
<rect x="25.2" y="175.2" width="1.6" height="1.6" fill="#777"/>
<rect x="28.2" y="175.2" width="1.6" height="1.6" fill="#777"/>
<rect x="22.2" y="178.2" width="1.6" height="1.6" fill="#777"/>
<rect x="25.2" y="178.2" width="1.6" height="1.6" fill="#777"/>
<rect x="28.2" y="178.2" width="1.6" height="1.6" fill="#777"/>
<rect x="19.2" y="181.2" width="1.6" height="1.6" fill="#777"/>
<rect x="22.2" y="181.2" width="1.6" height="1.6" fill="#777"/>
<rect x="25.2" y="181.2" width="1.6" height="1.6" fill="#777"/>
<rect x="28.2" y="181.2" width="1.6" height="1.6" fill="#777"/>
<rect x="16.2" y="184.2" width="1.6" height="1.6" fill="#777"/>
<rect x="19.2" y="184.2" width="1.6" height="1.6" fill="#777"/>
<rect x="22.2" y="184.2" width="1.6" height="1.6" fill="#777"/>
<rect x="25.2" y="184.2" width="1.6" height="1.6" fill="#777"/>
<rect x="28.2" y="184.2" width="1.6" height="1.6" fill="#777"/>
<rect x="13.2" y="188.2" width="1.6" height="1.6" fill="#777"/>
<rect x="16.2" y="188.2" width="1.6" height="1.6" fill="#777"/>
<rect x="19.2" y="188.2" width="1.6" height="1.6" fill="#777"/>
<rect x="22.2" y="188.2" width="1.6" height="1.6" fill="#777"/>
<rect x="25.2" y="188.2" width="1.6" height="1.6" fill="#777"/>
<rect x="28.2" y="188.2" width="1.6" height="1.6" fill="#777"/>
<path d="M8.5 200V221.5H30 M8.5 221.5L27 202" stroke="#4d4d4d" stroke-width="1.2" fill="none"/><path d="M6.5 203l2-3.5 2 3.5z M27 219.5l3.5 2-3.5 2z" fill="#4d4d4d"/><circle cx="28" cy="201.5" r="2.2" fill="#c8142a"/>
<text x="11.5" y="209" font-family="Liberation Sans" font-size="12" fill="#4d4d4d" stroke="#4d4d4d" stroke-width="0.3">r</text>
<text x="20.5" y="221" font-family="Liberation Sans" font-style="italic" font-size="11.5" fill="#4d4d4d" stroke="#4d4d4d" stroke-width="0.3">θ</text>
<text x="19" y="243.6" text-anchor="middle" font-family="Liberation Sans" font-size="12.5" fill="#4d4d4d" textLength="10.7" lengthAdjust="spacingAndGlyphs" stroke="#4d4d4d" stroke-width="0.35">in</text><path d="M11 248H27" stroke="#4d4d4d" stroke-width="1.6"/><path d="M8.5 248l5-3v6z M29.5 248l-5-3v6z" fill="#4d4d4d"/>
<text x="19" y="275.9" text-anchor="middle" font-family="Liberation Sans" font-size="12.5" fill="#4d4d4d" textLength="16.8" lengthAdjust="spacingAndGlyphs" stroke="#4d4d4d" stroke-width="0.35">mil</text><path d="M11 279.5H27" stroke="#4d4d4d" stroke-width="1.6"/><path d="M8.5 279.5l5-3v6z M29.5 279.5l-5-3v6z" fill="#4d4d4d"/>
<text x="19" y="308" text-anchor="middle" font-family="Liberation Sans" font-size="14.5" fill="#4d4d4d" textLength="21.3" lengthAdjust="spacingAndGlyphs" stroke="#4d4d4d" stroke-width="0.35">mm</text><path d="M11 312H27" stroke="#4d4d4d" stroke-width="1.6"/><path d="M8.5 312l5-3v6z M29.5 312l-5-3v6z" fill="#4d4d4d"/>
<path d="M19 327V351 M7 339H31" stroke="#888" stroke-width="0.8"/><path d="M19 335V343 M15 339H23" stroke="#1e78c8" stroke-width="2.6"/><path d="M19 339L27 346L24 347L26.5 351L25 352L22.5 348L20 350Z" fill="#4d4d4d"/>
<rect x="8" y="359" width="22" height="1" fill="#b8babc"/>
<rect x="8" y="400.5" width="22" height="1" fill="#b8babc"/>
<rect x="8" y="473.5" width="22" height="1" fill="#b8babc"/>
<rect x="8" y="546" width="22" height="1" fill="#b8babc"/>
<rect x="8" y="619.5" width="22" height="1" fill="#b8babc"/>
<rect x="8" y="725" width="22" height="1" fill="#b8babc"/>
<path d="M11 369V390 M8 388H29.5 M11 388L27 373" stroke="#4d4d4d" stroke-width="2"/><path d="M11 382H17V388" fill="none" stroke="#4d4d4d" stroke-width="1"/>
<path d="M11.6 414.8L25.8 426.7 M24.9 416.6L12.4 428.1 M11.6 414.8L31 418" stroke="#4d4d4d" stroke-width="1.1"/>
<circle cx="11.6" cy="414.8" r="2.4" fill="#fff" stroke="#4d4d4d" stroke-width="1"/>
<circle cx="24.9" cy="416.6" r="2.4" fill="#fff" stroke="#4d4d4d" stroke-width="1"/>
<circle cx="12.4" cy="428.1" r="2.4" fill="#fff" stroke="#4d4d4d" stroke-width="1"/>
<circle cx="25.8" cy="426.7" r="2.4" fill="#fff" stroke="#4d4d4d" stroke-width="1"/>
<path d="M7.5 464L30.2 441.4 M9.8 453.9L20 443.8 M16.9 461.9Q26 460 28 450.9" stroke="#4d4d4d" stroke-width="1.1" fill="none"/>
<circle cx="9.8" cy="453.9" r="2.3" fill="#fff" stroke="#4d4d4d" stroke-width="1"/>
<circle cx="20" cy="443.8" r="2.3" fill="#fff" stroke="#4d4d4d" stroke-width="1"/>
<circle cx="16.9" cy="461.9" r="2.3" fill="#fff" stroke="#4d4d4d" stroke-width="1"/>
<circle cx="28" cy="450.9" r="2.3" fill="#fff" stroke="#4d4d4d" stroke-width="1"/>
<path d="M7.5 483.3L15 490 M7.5 494.5L13 500.5H22L27.5 505.6" stroke="#4d4d4d" stroke-width="1.6" fill="none"/><path d="M12.5 482.5L18 487H23.5L31 495 M20.5 493.5L31 502.5" stroke="#c8143a" stroke-width="1.6" fill="none"/><circle cx="17" cy="493.8" r="2.9" fill="#fff" stroke="#f39c12" stroke-width="2"/>
<path d="M7 518H17.5L22 522.5V538 M20.5 514.7L27 520V538" stroke="#b8b8b8" stroke-width="1.6" fill="none"/><path d="M13.5 527V538" stroke="#e6a0b0" stroke-width="2.4"/><path d="M16 525.4H31" stroke="#a0cae8" stroke-width="2.6"/><circle cx="13.5" cy="525.4" r="2.9" fill="#fff" stroke="#f5c27e" stroke-width="1.8"/>
<path d="M9.5 577V566.5H16V557H29V577Z" fill="#3d9fe3" stroke="#2a7fc0" stroke-width="0.8"/><circle cx="23.5" cy="566.5" r="3.4" fill="#fff"/><path d="M23.5 566.5H29.5" stroke="#333" stroke-width="1.5"/><circle cx="23.5" cy="566.5" r="1.6" fill="#333"/>
<path d="M9.5 608.5V598H16V589H28.5V608.5Z" fill="none" stroke="#2a86d6" stroke-width="1.3" stroke-dasharray="2.2 1.6"/><path d="M23 597.5H29" stroke="#333" stroke-width="1.4"/><circle cx="23" cy="597.5" r="1.7" fill="#333"/>
<path d="M7.5 632H30V647H7.5V642.5Q10 640 7.5 637Z" fill="none" stroke="#4d4d4d" stroke-width="1.1"/><path d="M10 627.5h4.5v5h-4.5z M16.5 627.5h4.5v5h-4.5z M23 627.5h4.5v5h-4.5z" fill="#2a86d6"/><path d="M10.5 646.5h4v5h-4z M17 646.5h4v5h-4z M23.5 646.5h4v5h-4z" fill="#fff" stroke="#2a86d6" stroke-width="1.1"/><path d="M7 651.5L31 627.5" stroke="#333" stroke-width="1.3"/>
<circle cx="19.5" cy="672" r="7" fill="none" stroke="#f39c12" stroke-width="4.4"/><path d="M26.5 670A7 7 0 0 1 17 679" fill="none" stroke="#e8e8e8" stroke-width="4.6"/><circle cx="19.5" cy="672" r="6.3" fill="none" stroke="#c8c8c8" stroke-width="1"/><circle cx="19.5" cy="672" r="9" fill="none" stroke="#c8c8c8" stroke-width="0.8" stroke-dasharray="0 14 14 40"/><path d="M7 683.5L31 660" stroke="#333" stroke-width="1.3"/>
<path d="M19 692V716" stroke="#c8143a" stroke-width="3"/><path d="M21.5 704V716" stroke="#c8143a" stroke-width="0.9"/><path d="M7 704H19" stroke="#2a86d6" stroke-width="3"/><path d="M19 702.5H31 M19 706H31" stroke="#2a86d6" stroke-width="0.9"/><path d="M7 716.5L31 692.5" stroke="#333" stroke-width="1.3"/>
<path d="M19 744L30 751L19 758L8 751Z" fill="#f39c12"/><path d="M19 741L30 748L19 755L8 748Z" fill="#333"/><path d="M19 735L30 742.5L19 750L8 742.5Z" fill="#2a86d6"/>
<path d="M9 788L19 778" stroke="#4d4d4d" stroke-width="1.6"/><path d="M20 777L29 768" stroke="#4d4d4d" stroke-width="4" stroke-linecap="round"/><path d="M13 771L28 786" stroke="#2a86d6" stroke-width="3.6" stroke-linecap="round"/><circle cx="11.5" cy="769.5" r="5" fill="#2a86d6"/><path d="M11 768L7.5 764.5" stroke="#eff0f1" stroke-width="3.2"/>
</svg>
<svg class="a" style="left:0;top:0" width="1072" height="844">
<rect x="974.5" y="630.5" width="29" height="29" fill="#c2e0f3" stroke="#3daee9" stroke-width="1"/>
<rect x="978" y="199" width="22" height="1" fill="#b8babc"/>
<rect x="978" y="399.5" width="22" height="1" fill="#b8babc"/>
<rect x="978" y="793" width="22" height="1" fill="#b8babc"/>
<path d="M984 139L994 149L990 150L993.5 155.5L991 157L987.5 151L984 154Z" fill="#4d4d4d"/>
<path d="M977 167L1000 190 M1000 167L977 190" stroke="#4d4d4d" stroke-width="1.1"/><circle cx="988.5" cy="178.5" r="2.5" fill="#fff" stroke="#4d4d4d" stroke-width="1"/>
<path d="M977.5 211.5H1000V228H977.5V222.5Q980 220 977.5 217Z" fill="none" stroke="#4d4d4d" stroke-width="1"/><path d="M980 208h5v6h-5z M986.5 208h5v6h-5z M993 208h5v6h-5z M980 225.5h5v6h-5z M986.5 225.5h5v6h-5z M993 225.5h5v6h-5z" fill="#1e78c8"/>
<path d="M979 262L985 252H993L999 242" stroke="#1e78c8" stroke-width="2.3" fill="none"/><path d="M1004 260V268H996Z" fill="#111"/>
<path d="M977 285H979V281.5a2 2 0 0 1 4 0V288a2 2 0 0 0 4 0V281.5a2 2 0 0 1 4 0V288a2 2 0 0 0 4 0V281.5a2 2 0 0 1 4 0V285H1000" stroke="#1e78c8" stroke-width="1.9" fill="none"/><path d="M1004 290V298H996Z" fill="#111"/>
<circle cx="989" cy="316" r="5.4" fill="none" stroke="#f39c12" stroke-width="4"/>
<path d="M977 357.5V346H984V339H999V357.5Z" fill="#1e78c8"/><circle cx="993" cy="348" r="3" fill="#fff"/><path d="M993 348H999" stroke="#333" stroke-width="1.3"/><circle cx="993" cy="348" r="1.5" fill="#333"/>
<clipPath id="kc"><path d="M977.5 389.5V379.5H984.5V369.5H999.5V389.5Z"/></clipPath>
<path d="M977.5 389.5V379.5H984.5V369.5H999.5V389.5Z" fill="#fff"/>
<g clip-path="url(#kc)"><path d="M970 395L1000 365 M975 395L1005 365 M980 395L1010 365 M985 395L1015 365 M990 395L1020 365 M965 395L995 365" stroke="#4d4d4d" stroke-width="2.2"/></g>
<path d="M977.5 389.5V379.5H984.5V369.5H999.5V389.5Z" fill="none" stroke="#4d4d4d" stroke-width="1.3"/>
<path d="M978 431L999 410" stroke="#4d4d4d" stroke-width="1.6"/>
<path d="M979 463A20 20 0 0 1 999 442" fill="none" stroke="#4d4d4d" stroke-width="1.6"/>
<rect x="979.5" y="476.5" width="18" height="17" fill="#ddd" stroke="#4d4d4d" stroke-width="1.5"/>
<circle cx="988.5" cy="517" r="9" fill="#ddd" stroke="#4d4d4d" stroke-width="1.5"/>
<path d="M979 539L999 546L991 550L994 558L980 557Z" fill="#ddd" stroke="#4d4d4d" stroke-width="1.5" stroke-linejoin="round"/>
<path d="M979 589Q980 578 988 577Q996 576 999 568" stroke="#1e78c8" stroke-width="1.6" fill="none"/><path d="M977 578H1001" stroke="#1e78c8" stroke-width="1"/><circle cx="979" cy="578" r="1.5" fill="#1e78c8"/><circle cx="999" cy="578" r="1.5" fill="#1e78c8"/><circle cx="988" cy="577" r="2" fill="#fff" stroke="#1e78c8" stroke-width="1"/>
<rect x="978" y="602" width="22" height="22" rx="2" fill="#4d4d4d"/><rect x="980" y="604" width="18" height="18" fill="#fff"/><path d="M980 620L986 612L990 616L993 613L998 619V622H980Z" fill="#4d4d4d"/><circle cx="993" cy="608" r="2.3" fill="#4d4d4d"/>
<path d="M980 637H998 M989 637V656" stroke="#333" stroke-width="3.4"/>
<rect x="979.5" y="667.5" width="19" height="19" fill="#fff" stroke="#4d4d4d" stroke-width="1.6"/><path d="M983 672H995 M983 676H995 M983 680H990" stroke="#4d4d4d" stroke-width="1.2"/>
<rect x="978.5" y="697.5" width="21" height="21" fill="#fff" stroke="#4d4d4d" stroke-width="1.1"/><path d="M978.5 703H999.5 M978.5 708H999.5 M978.5 713H999.5 M984 697.5V718.5 M989 697.5V718.5 M994 697.5V718.5" stroke="#4d4d4d" stroke-width="1"/>
<path d="M979 731H992 M979 746H992 M994.5 733V745" stroke="#4d4d4d" stroke-width="1.1"/><circle cx="979" cy="731" r="2.4" fill="#1e78c8"/><circle cx="979" cy="746" r="2.4" fill="#1e78c8"/><path d="M994.5 731l-2 3h4z M994.5 747l-2-3h4z" fill="#4d4d4d"/><path d="M1004 746V753H997Z" fill="#111"/>
<path d="M982 760L994 772L989 773L992 779L990 780L987 774L982 778Z" fill="#4d4d4d"/><circle cx="995" cy="778" r="6.5" fill="#c8142a"/><path d="M992 775l6 6 M998 775l-6 6" stroke="#fff" stroke-width="1.6"/>
</svg>
<div class="a" style="left:1006px;top:128px;width:6px;height:675px;background:#dcdcdd"></div>
<div class="a" style="left:1011px;top:127px;width:61px;height:16.5px;background:#c5c6c7"></div>
<div class="t" style="left:1014.2px;top:129.34px;font-size:11px;color:#232627">Apariencia</div>
<div class="a" style="left:1011px;top:143.5px;width:61px;height:38.5px;background:#dfe0e1"></div>
<div class="a" style="left:1012px;top:149px;width:48px;height:33px;background:#eff0f1;border-radius:3px 3px 0 0;border-top:3px solid #3daee9"></div>
<div class="a" style="left:1060.5px;top:149px;width:12px;height:32px;background:#c9cacb"></div>
<div class="t" style="left:1018.5px;top:161.28px;font-size:12.4px;color:#232627">Capas</div>
<div class="t" style="left:1068px;top:161.28px;font-size:12.4px;color:#232627">C</div>
<div class="a" style="left:1011px;top:182px;width:61px;height:314px;background:#eff0f1"></div>
<div class="a" style="left:1011px;top:182px;width:61px;height:19px;background:#dcdde0"></div>
<svg class="a" style="left:1011px;top:182px" width="61" height="314"><rect x="16" y="3" width="16" height="14" fill="#c83434"/><circle cx="46" cy="10" r="8" fill="#595959"/><path d="M39.5 10Q46 4 52.5 10Q46 16 39.5 10Z" fill="#fff"/><circle cx="46" cy="10" r="2.4" fill="#595959"/><circle cx="46" cy="10" r="1.1" fill="#fff"/><rect x="59" y="5" width="2" height="10" fill="#7a2a20"/><rect x="16" y="22" width="16" height="14" fill="#4d7fc4"/><circle cx="46" cy="29" r="8" fill="#595959"/><path d="M39.5 29Q46 23 52.5 29Q46 35 39.5 29Z" fill="#fff"/><circle cx="46" cy="29" r="2.4" fill="#595959"/><circle cx="46" cy="29" r="1.1" fill="#fff"/><rect x="59" y="24" width="2" height="10" fill="#7a2a20"/><rect x="16" y="41" width="16" height="14" fill="#800080"/><circle cx="46" cy="48" r="8" fill="#595959"/><path d="M39.5 48Q46 42 52.5 48Q46 54 39.5 48Z" fill="#fff"/><circle cx="46" cy="48" r="2.4" fill="#595959"/><circle cx="46" cy="48" r="1.1" fill="#fff"/><rect x="59" y="43" width="2" height="10" fill="#7a2a20"/><rect x="16" y="60" width="16" height="14" fill="#000080"/><circle cx="46" cy="67" r="8" fill="#595959"/><path d="M39.5 67Q46 61 52.5 67Q46 73 39.5 67Z" fill="#fff"/><circle cx="46" cy="67" r="2.4" fill="#595959"/><circle cx="46" cy="67" r="1.1" fill="#fff"/><rect x="59" y="62" width="2" height="10" fill="#7a2a20"/><rect x="16" y="79" width="16" height="14" fill="#a3908a"/><circle cx="46" cy="86" r="8" fill="#595959"/><path d="M39.5 86Q46 80 52.5 86Q46 92 39.5 86Z" fill="#fff"/><circle cx="46" cy="86" r="2.4" fill="#595959"/><circle cx="46" cy="86" r="1.1" fill="#fff"/><rect x="59" y="81" width="2" height="10" fill="#7a2a20"/><rect x="16" y="98" width="16" height="14" fill="#14b4b4"/><circle cx="46" cy="105" r="8" fill="#595959"/><path d="M39.5 105Q46 99 52.5 105Q46 111 39.5 105Z" fill="#fff"/><circle cx="46" cy="105" r="2.4" fill="#595959"/><circle cx="46" cy="105" r="1.1" fill="#fff"/><rect x="59" y="100" width="2" height="10" fill="#7a2a20"/><rect x="16" y="117" width="16" height="14" fill="#f2eca2"/><circle cx="46" cy="124" r="8" fill="#595959"/><path d="M39.5 124Q46 118 52.5 124Q46 130 39.5 124Z" fill="#fff"/><circle cx="46" cy="124" r="2.4" fill="#595959"/><circle cx="46" cy="124" r="1.1" fill="#fff"/><rect x="59" y="119" width="2" height="10" fill="#7a2a20"/><rect x="16" y="136" width="16" height="14" fill="#e8b2a7"/><circle cx="46" cy="143" r="8" fill="#595959"/><path d="M39.5 143Q46 137 52.5 143Q46 149 39.5 143Z" fill="#fff"/><circle cx="46" cy="143" r="2.4" fill="#595959"/><circle cx="46" cy="143" r="1.1" fill="#fff"/><rect x="59" y="138" width="2" height="10" fill="#7a2a20"/><rect x="16" y="155" width="16" height="14" fill="#4d2e6e"/><circle cx="46" cy="162" r="8" fill="#595959"/><path d="M39.5 162Q46 156 52.5 162Q46 168 39.5 162Z" fill="#fff"/><circle cx="46" cy="162" r="2.4" fill="#595959"/><circle cx="46" cy="162" r="1.1" fill="#fff"/><rect x="59" y="157" width="2" height="10" fill="#7a2a20"/><rect x="16" y="174" width="16" height="14" fill="#1e6a64"/><circle cx="46" cy="181" r="8" fill="#595959"/><path d="M39.5 181Q46 175 52.5 181Q46 187 39.5 181Z" fill="#fff"/><circle cx="46" cy="181" r="2.4" fill="#595959"/><circle cx="46" cy="181" r="1.1" fill="#fff"/><rect x="59" y="176" width="2" height="10" fill="#7a2a20"/><rect x="16" y="193" width="16" height="14" fill="#c2c2c2"/><circle cx="46" cy="200" r="8" fill="#595959"/><path d="M39.5 200Q46 194 52.5 200Q46 206 39.5 200Z" fill="#fff"/><circle cx="46" cy="200" r="2.4" fill="#595959"/><circle cx="46" cy="200" r="1.1" fill="#fff"/><rect x="59" y="195" width="2" height="10" fill="#7a2a20"/><rect x="16" y="212" width="16" height="14" fill="#5e91de"/><circle cx="46" cy="219" r="8" fill="#595959"/><path d="M39.5 219Q46 213 52.5 219Q46 225 39.5 219Z" fill="#fff"/><circle cx="46" cy="219" r="2.4" fill="#595959"/><circle cx="46" cy="219" r="1.1" fill="#fff"/><rect x="59" y="214" width="2" height="10" fill="#7a2a20"/><rect x="16" y="231" width="16" height="14" fill="#b4dbd2"/><circle cx="46" cy="238" r="8" fill="#595959"/><path d="M39.5 238Q46 232 52.5 238Q46 244 39.5 238Z" fill="#fff"/><circle cx="46" cy="238" r="2.4" fill="#595959"/><circle cx="46" cy="238" r="1.1" fill="#fff"/><rect x="59" y="233" width="2" height="10" fill="#7a2a20"/><rect x="16" y="250" width="16" height="14" fill="#d6c550"/><circle cx="46" cy="257" r="8" fill="#595959"/><path d="M39.5 257Q46 251 52.5 257Q46 263 39.5 257Z" fill="#fff"/><circle cx="46" cy="257" r="2.4" fill="#595959"/><circle cx="46" cy="257" r="1.1" fill="#fff"/><rect x="59" y="252" width="2" height="10" fill="#7a2a20"/><rect x="16" y="269" width="16" height="14" fill="#d0d2cd"/><circle cx="46" cy="276" r="8" fill="#595959"/><path d="M39.5 276Q46 270 52.5 276Q46 282 39.5 276Z" fill="#fff"/><circle cx="46" cy="276" r="2.4" fill="#595959"/><circle cx="46" cy="276" r="1.1" fill="#fff"/><rect x="59" y="271" width="2" height="10" fill="#7a2a20"/><rect x="16" y="288" width="16" height="14" fill="#ff26e2"/><circle cx="46" cy="295" r="8" fill="#595959"/><path d="M39.5 295Q46 289 52.5 295Q46 301 39.5 295Z" fill="#fff"/><circle cx="46" cy="295" r="2.4" fill="#595959"/><circle cx="46" cy="295" r="1.1" fill="#fff"/><rect x="59" y="290" width="2" height="10" fill="#7a2a20"/><rect x="16" y="307" width="16" height="7" fill="#ff26e2"/><circle cx="46" cy="314" r="8" fill="#595959"/><path d="M39.5 314Q46 308 52.5 314Q46 320 39.5 314Z" fill="#fff"/><circle cx="46" cy="314" r="2.4" fill="#595959"/><circle cx="46" cy="314" r="1.1" fill="#fff"/><rect x="59" y="309" width="2" height="10" fill="#7a2a20"/><path d="M5 5.5V14.5L10 10Z" fill="#3535f0"/></svg>
<div class="a" style="left:1011px;top:496px;width:61px;height:25px;background:#d7d8da;border-top:1px solid #c4c5c7;border-bottom:1px solid #c4c5c7"></div>
<svg class="a" style="left:1023px;top:503px" width="8" height="10"><path d="M1 0V10L6 5Z" fill="#222"/></svg>
<div class="t" style="left:1032.7px;top:504.28px;font-size:12.4px;color:#232627">Opciones</div>
<div class="a" style="left:1011px;top:521px;width:61px;height:125px;background:#dfe0e1"></div>
<div class="t" style="left:1018.5px;top:534.78px;font-size:12.4px;color:#232627">Preconfig</div>
<div class="combo" style="left:1018.5px;top:551.5px;width:70px;height:32px;background:#eeeff0"></div>
<div class="t" style="left:1027.4px;top:562.78px;font-size:12.4px;color:#232627">---</div>
<div class="t" style="left:1018.5px;top:590.78px;font-size:12.4px;color:#232627">Vistas (Sh</div>
<div class="combo" style="left:1018.5px;top:608px;width:70px;height:31.5px;background:#eeeff0"></div>
<div class="t" style="left:1027.4px;top:619.28px;font-size:12.4px;color:#232627">---</div>
<div class="a" style="left:1011px;top:646px;width:61px;height:5px;background:#e6e7e8"></div>
<div class="a" style="left:1011px;top:651px;width:61px;height:17px;background:#c5c6c7"></div>
<div class="t" style="left:1014px;top:653.04px;font-size:11px;color:#232627">Filtro de sel</div>
<div class="a" style="left:1011px;top:668px;width:61px;height:135px;background:#dfe0e1"></div>
<div class="a" style="left:1020px;top:675.4px;width:16px;height:16px;background:#c8e2f2;border:1px solid #93cde9;border-radius:3px"></div>
<svg class="a" style="left:1020px;top:675.4px" width="16" height="16"><path d="M3.5 8.5l3 3 6-7" fill="none" stroke="#232627" stroke-width="2"/></svg>
<div class="t" style="left:1040px;top:678.18px;font-size:12.4px;color:#232627">Todos</div>
<div class="a" style="left:1020px;top:696.4px;width:16px;height:16px;background:#c8e2f2;border:1px solid #93cde9;border-radius:3px"></div>
<svg class="a" style="left:1020px;top:696.4px" width="16" height="16"><path d="M3.5 8.5l3 3 6-7" fill="none" stroke="#232627" stroke-width="2"/></svg>
<div class="t" style="left:1040px;top:699.18px;font-size:12.4px;color:#232627">Huellas</div>
<div class="a" style="left:1020px;top:717.4px;width:16px;height:16px;background:#c8e2f2;border:1px solid #93cde9;border-radius:3px"></div>
<svg class="a" style="left:1020px;top:717.4px" width="16" height="16"><path d="M3.5 8.5l3 3 6-7" fill="none" stroke="#232627" stroke-width="2"/></svg>
<div class="t" style="left:1040px;top:720.18px;font-size:12.4px;color:#232627">Pistas</div>
<div class="a" style="left:1020px;top:738.4px;width:16px;height:16px;background:#c8e2f2;border:1px solid #93cde9;border-radius:3px"></div>
<svg class="a" style="left:1020px;top:738.4px" width="16" height="16"><path d="M3.5 8.5l3 3 6-7" fill="none" stroke="#232627" stroke-width="2"/></svg>
<div class="t" style="left:1040px;top:741.18px;font-size:12.4px;color:#232627">Pads</div>
<div class="a" style="left:1020px;top:759.4px;width:16px;height:16px;background:#c8e2f2;border:1px solid #93cde9;border-radius:3px"></div>
<svg class="a" style="left:1020px;top:759.4px" width="16" height="16"><path d="M3.5 8.5l3 3 6-7" fill="none" stroke="#232627" stroke-width="2"/></svg>
<div class="t" style="left:1040px;top:762.18px;font-size:12.4px;color:#232627">Zonas</div>
<div class="a" style="left:1020px;top:780.4px;width:16px;height:16px;background:#c8e2f2;border:1px solid #93cde9;border-radius:3px"></div>
<svg class="a" style="left:1020px;top:780.4px" width="16" height="16"><path d="M3.5 8.5l3 3 6-7" fill="none" stroke="#232627" stroke-width="2"/></svg>
<div class="t" style="left:1040px;top:783.18px;font-size:12.4px;color:#232627">Cotas</div>
<div class="a" style="left:1px;top:803px;width:1071px;height:1px;background:#dadbdc"></div>
<div class="t" style="left:14px;top:807.87px;font-size:13.4px;color:#232627;letter-spacing:-0.062px;">Texto de la placa</div>
<div class="t" style="left:14px;top:826.87px;font-size:13.4px;color:#232627;letter-spacing:0.090px;">Proyecto basico</div>
<div class="t" style="left:143px;top:807.87px;font-size:13.4px;color:#232627;letter-spacing:-0.300px;">Capas</div>
<div class="t" style="left:143px;top:826.87px;font-size:13.4px;color:#232627;letter-spacing:-0.300px;">F.Cu</div>
<div class="t" style="left:209px;top:807.87px;font-size:13.4px;color:#232627;letter-spacing:0.177px;">Reflejar</div>
<div class="t" style="left:209px;top:826.87px;font-size:13.4px;color:#232627;letter-spacing:0.600px;">No</div>
<div class="t" style="left:287px;top:807.87px;font-size:13.4px;color:#232627;letter-spacing:0.600px;">Ángulo</div>
<div class="t" style="left:287px;top:826.87px;font-size:13.4px;color:#232627;">0</div>
<div class="t" style="left:361px;top:807.87px;font-size:13.4px;color:#232627;letter-spacing:0.238px;">Tipo de letra</div>
<div class="t" style="left:361px;top:826.87px;font-size:13.4px;color:#232627;letter-spacing:0.540px;">Predeterminado</div>
<div class="t" style="left:493px;top:807.87px;font-size:13.4px;color:#232627;letter-spacing:0.352px;">Grosor</div>
<div class="t" style="left:493px;top:826.87px;font-size:13.4px;color:#232627;letter-spacing:0.575px;">0,4000 mm</div>
<div class="t" style="left:594px;top:807.87px;font-size:13.4px;color:#232627;letter-spacing:0.337px;">Anchura</div>
<div class="t" style="left:594px;top:826.87px;font-size:13.4px;color:#232627;letter-spacing:0.600px;">2,0000 mm</div>
<div class="t" style="left:695px;top:807.87px;font-size:13.4px;color:#232627;letter-spacing:0.600px;">Alto</div>
<div class="t" style="left:695px;top:826.87px;font-size:13.4px;color:#232627;letter-spacing:0.600px;">2,0000 mm</div>
<div class="a" style="left:284px;top:56px;width:368px;height:304px;border-radius:0 0 2px 2px;box-shadow:0 3px 10px rgba(0,0,0,0.28)"></div>
<div class="a" style="left:284px;top:56px;width:368px;height:304px;background:#f3f4f5;border:1px solid #d2d4d6;border-top:none;border-radius:0 0 2px 2px"></div>
<div class="a" style="left:284.5px;top:56px;width:1px;height:12px;background:#b9bbbd"></div>
<div class="a" style="left:288px;top:85px;width:361px;height:28.5px;background:#c0e0f3;border:1px solid #3daee9;border-radius:4px"></div>
<div class="a" style="left:289px;top:116px;width:359px;height:1px;background:#c9cbcd"></div>
<div class="a" style="left:289px;top:237px;width:359px;height:1px;background:#c9cbcd"></div>
<div class="t" style="left:325.8px;top:66.87px;font-size:13.4px;color:#232627;letter-spacing:-0.036px">Mostrar estadísticas de la placa</div>
<div class="t" style="left:325.8px;top:93.87px;font-size:13.4px;color:#232627;letter-spacing:0.293px">Herramienta de medida</div>
<div class="t" style="left:325.8px;top:128.37px;font-size:13.4px;color:#232627;letter-spacing:0.117px">Comprobar reglas de diseño</div>
<div class="t" style="left:325.8px;top:157.37px;font-size:13.4px;color:#232627;letter-spacing:0.351px">Marcador anterior</div>
<div class="t" style="left:325.8px;top:185.87px;font-size:13.4px;color:#232627;letter-spacing:0.218px">Marcador siguiente</div>
<div class="t" style="left:325.8px;top:215.37px;font-size:13.4px;color:#232627;letter-spacing:-0.011px">Excluir marcador</div>
<div class="t" style="left:325.8px;top:249.37px;font-size:13.4px;color:#232627;letter-spacing:0.042px">Resolución de margen</div>
<div class="t" style="left:325.8px;top:278.37px;font-size:13.4px;color:#232627;letter-spacing:0.060px">Resolución de restricciones</div>
<div class="t" style="left:325.8px;top:307.37px;font-size:13.4px;color:#232627;letter-spacing:0.027px">Mostrar asociaciones de huellas</div>
<div class="t" style="left:325.8px;top:335.87px;font-size:13.4px;color:#232627;letter-spacing:0.093px">Comparar huella con biblioteca</div>
<div class="t" style="left:547.5px;top:93.87px;font-size:13.4px;color:#6d7679">Mayús+Ctrl+M</div>
<svg class="a" style="left:0;top:0" width="1072" height="844"><g transform="translate(308,99) rotate(-45)"><rect x="-13" y="-4.2" width="26" height="8.4" fill="none" stroke="#4d4d4d" stroke-width="1.7"/><path d="M-8 4.2V1 M-3 4.2V2 M2 4.2V1 M7 4.2V2" stroke="#4d4d4d" stroke-width="1.4"/></g><g><rect x="298" y="123.5" width="5" height="5" fill="none" stroke="#4d4d4d" stroke-width="1.1"/><rect x="298" y="130.5" width="5" height="5" fill="none" stroke="#4d4d4d" stroke-width="1.1"/><rect x="298" y="137.5" width="5" height="5" fill="none" stroke="#4d4d4d" stroke-width="1.1"/><path d="M305 126H314 M305 133H308" stroke="#4d4d4d" stroke-width="1.1"/><circle cx="313.5" cy="138" r="6.8" fill="#c82f45"/><path d="M310 138l2.5 2.5 4.5-4.5" stroke="#fff" stroke-width="1.8" fill="none"/></g><path d="M296 150.2L317.2 154.8L305.9 158.0L302.4 166.7Z" fill="#1a7cc8" stroke="#1a7cc8" stroke-width="0.6" stroke-linejoin="round"/><circle cx="312.1" cy="165.9" r="6.9" fill="#c40a0a"/><path d="M316.8 165.9H309.5 M312.4 162.9L309.4 165.9L312.4 168.9" stroke="#fff" stroke-width="2" fill="none"/><path d="M296 178.7L317.2 183.3L305.9 186.5L302.4 195.2Z" fill="#1a7cc8" stroke="#1a7cc8" stroke-width="0.6" stroke-linejoin="round"/><circle cx="312.1" cy="194.4" r="6.9" fill="#c40a0a"/><path d="M307.4 194.4H314.7 M311.8 191.4L314.8 194.4L311.8 197.4" stroke="#fff" stroke-width="2" fill="none"/><path d="M296 207.7L317.2 212.3L305.9 215.5L302.4 224.2Z" fill="#1a7cc8" stroke="#1a7cc8" stroke-width="0.6" stroke-linejoin="round"/><circle cx="312.1" cy="223.4" r="6.9" fill="#c40a0a"/><path d="M308 223.4H316.2" stroke="#fff" stroke-width="2.4"/><path d="M315.3 243.7l4.4 4.4-4.4 4.4-4.4-4.4z" fill="#1e7ed0"/><path d="M301.6 256.9l4.4 4.4-4.4 4.4-4.4-4.4z" fill="#1e7ed0"/><path d="M298.8 257.0L296.5 253.0L307.5 243.1L311.5 246.7" stroke="#4d4d4d" stroke-width="1" fill="none"/><path d="M298.2 252.1l2.2 -0.4 -0.3 2.3z M306.2 243.7l-2.2 0.4 0.3 -2.3z" fill="#4d4d4d"/><path d="M315.3 272.7l4.4 4.4-4.4 4.4-4.4-4.4z" fill="#1e7ed0"/><path d="M301.6 285.9l4.4 4.4-4.4 4.4-4.4-4.4z" fill="#1e7ed0"/><path d="M298.8 286.0L296.5 282.0L307.5 272.1L311.5 275.7" stroke="#4d4d4d" stroke-width="1" fill="none"/><path d="M298.2 281.1l2.2 -0.4 -0.3 2.3z M306.2 272.7l-2.2 0.4 0.3 -2.3z" fill="#4d4d4d"/><path d="M300.6 312.2A5.4 5.4 0 0 1 307.6 303.9L310.3 312.3" stroke="#4d4d4d" stroke-width="3.4" fill="none"/><path d="M305.6 310.2L308.4 318.4A5.2 5.2 0 0 0 315.8 311.4" stroke="#1e7ed0" stroke-width="3.4" fill="none"/><rect x="297" y="331" width="4.8" height="20" fill="#4d4d4d"/><rect x="303" y="331" width="4.8" height="20" fill="#4d4d4d"/><path d="M298 333.5h2.8M298 335.5h2.8M298 337.5h2.8M298 347.5h2.8M304 333.5h2.8M304 335.5h2.8M304 337.5h2.8M304 347.5h2.8" stroke="#c8c8c8" stroke-width="0.9"/><path d="M309.2 331.6L313.5 330L320 349.5L315.8 351Z" fill="#1e7ed0"/><path d="M311.5 333.5l2-0.7M312.2 335.5l2-0.7M312.9 337.5l2-0.7M316 346.5l2-0.7" stroke="#bcd8f0" stroke-width="0.8"/></svg>
<svg class="a" style="left:0;top:0" width="1072" height="844"><path d="M481.2 102.9L513.1 99.8L510.5 107.8L740.8 168.5L739.2 175.2L508.6 114.7L506.8 121Z" fill="#ff0000"/></svg>
</body></html>
